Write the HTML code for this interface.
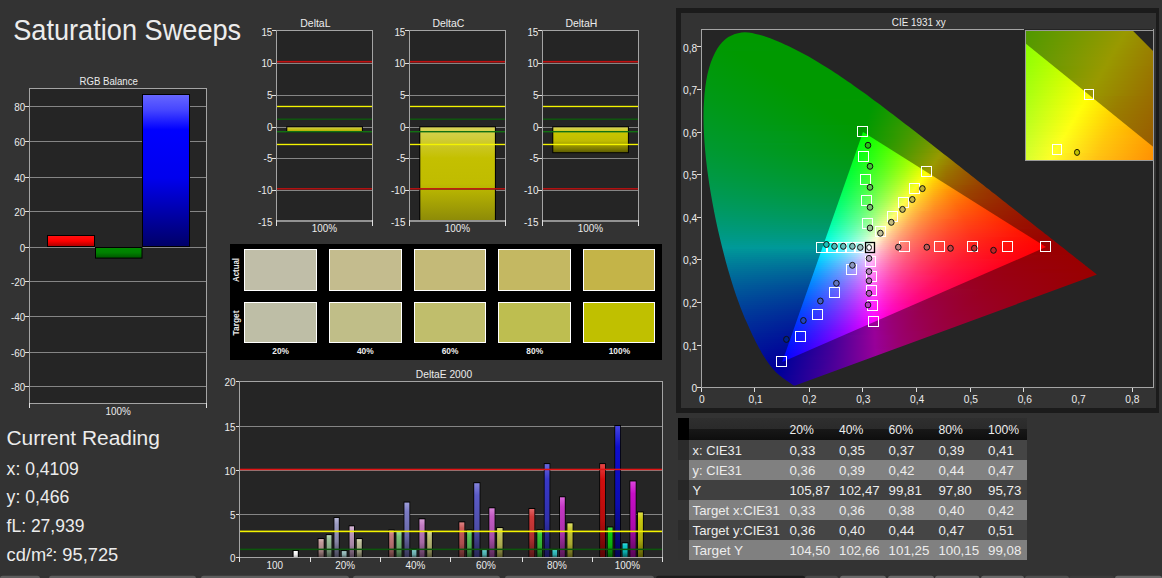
<!DOCTYPE html><html><head><meta charset="utf-8"><title>Saturation Sweeps</title><style>
html,body{margin:0;padding:0;background:#333333}
body{width:1162px;height:578px;overflow:hidden;position:relative;font-family:"Liberation Sans",sans-serif}
.c{position:absolute;overflow:hidden}
.c i{position:absolute;display:block}
svg{position:absolute;left:0;top:0}
svg text{font-family:"Liberation Sans",sans-serif;fill:#ececec}

</style></head><body>
<div style="position:absolute;left:676px;top:8px;width:475px;height:395px;border:5px solid #1b1b1b;border-right-width:3px;background:#333"></div>
<div style="position:absolute;left:701px;top:29px;width:453px;height:359px;background:#252525"></div>
<div class="c" style="left:701px;top:29px;width:453px;height:359px;clip-path:polygon(94.2px 356.5px,94.2px 356.5px,94.2px 356.5px,94.2px 356.5px,94.2px 356.5px,94.2px 356.5px,94.2px 356.5px,94.1px 356.5px,94.1px 356.5px,94.1px 356.5px,94.1px 356.5px,94.1px 356.5px,94.1px 356.5px,94.0px 356.5px,94.0px 356.5px,94.0px 356.5px,94.0px 356.5px,94.0px 356.5px,93.9px 356.5px,93.9px 356.5px,93.9px 356.5px,93.9px 356.5px,93.8px 356.5px,93.8px 356.6px,93.8px 356.6px,93.8px 356.6px,93.7px 356.6px,93.7px 356.6px,93.7px 356.6px,93.7px 356.6px,93.6px 356.6px,93.6px 356.6px,93.6px 356.6px,93.5px 356.6px,93.5px 356.6px,93.5px 356.6px,93.4px 356.6px,93.4px 356.6px,93.3px 356.6px,93.3px 356.6px,93.2px 356.6px,93.2px 356.6px,93.1px 356.6px,93.1px 356.5px,93.0px 356.5px,93.0px 356.5px,92.9px 356.5px,92.8px 356.5px,92.8px 356.4px,92.7px 356.4px,92.6px 356.3px,92.5px 356.3px,92.4px 356.2px,92.3px 356.2px,92.2px 356.1px,92.1px 356.1px,91.9px 356.0px,91.8px 355.9px,91.7px 355.8px,91.6px 355.8px,91.4px 355.7px,91.3px 355.6px,91.1px 355.4px,90.9px 355.3px,90.7px 355.2px,90.5px 355.1px,90.3px 354.9px,90.1px 354.8px,89.9px 354.6px,89.7px 354.5px,89.5px 354.3px,89.2px 354.1px,89.0px 354.0px,88.7px 353.8px,88.5px 353.6px,88.2px 353.4px,87.9px 353.2px,87.6px 353.0px,87.2px 352.7px,86.9px 352.5px,86.5px 352.2px,86.1px 351.9px,85.7px 351.7px,85.2px 351.4px,84.8px 351.1px,84.3px 350.7px,83.9px 350.4px,83.4px 350.1px,82.9px 349.7px,82.3px 349.3px,81.8px 348.9px,81.2px 348.5px,80.6px 348.1px,80.0px 347.6px,79.4px 347.1px,78.7px 346.5px,78.0px 346.0px,77.3px 345.3px,76.6px 344.7px,75.9px 344.1px,75.1px 343.4px,74.3px 342.5px,73.4px 341.6px,72.5px 340.6px,71.6px 339.5px,70.6px 338.3px,69.5px 337.0px,68.4px 335.6px,67.3px 334.0px,66.1px 332.3px,64.9px 330.5px,63.6px 328.6px,62.3px 326.5px,60.9px 324.2px,59.5px 321.6px,58.0px 318.9px,56.5px 316.0px,54.8px 312.9px,53.2px 309.6px,51.4px 306.0px,49.6px 302.1px,47.8px 297.9px,45.8px 293.6px,43.7px 288.9px,41.7px 284.0px,39.6px 278.7px,37.5px 273.1px,35.4px 267.2px,33.3px 261.0px,31.2px 254.4px,29.1px 247.5px,27.0px 240.4px,24.9px 233.0px,22.9px 225.3px,20.8px 217.1px,18.8px 208.8px,16.8px 200.2px,14.9px 191.5px,13.2px 182.9px,11.5px 174.1px,9.9px 165.1px,8.4px 156.1px,7.1px 147.0px,5.9px 138.1px,4.9px 129.3px,4.1px 120.8px,3.4px 112.2px,2.9px 103.8px,2.6px 95.5px,2.5px 87.5px,2.6px 79.8px,3.0px 72.3px,3.5px 65.1px,4.3px 58.0px,5.3px 51.3px,6.5px 45.0px,8.0px 39.2px,9.7px 33.8px,11.7px 28.7px,13.9px 24.0px,16.2px 19.8px,18.8px 16.1px,21.4px 12.9px,24.3px 10.2px,27.3px 8.0px,30.5px 6.4px,33.8px 5.1px,37.1px 4.2px,40.5px 3.6px,43.9px 3.3px,47.5px 3.5px,51.1px 4.1px,54.7px 4.9px,58.3px 5.8px,62.0px 6.8px,65.6px 7.9px,69.3px 9.2px,72.9px 10.7px,76.6px 12.2px,80.2px 13.8px,83.8px 15.4px,87.3px 17.1px,90.8px 18.7px,94.2px 20.4px,97.6px 22.2px,101.0px 24.0px,104.3px 25.8px,107.7px 27.6px,111.0px 29.5px,114.3px 31.5px,117.6px 33.4px,120.8px 35.4px,124.1px 37.4px,127.4px 39.5px,130.6px 41.6px,133.9px 43.7px,137.1px 45.8px,140.3px 48.0px,143.6px 50.2px,146.8px 52.4px,150.0px 54.6px,153.2px 56.9px,156.4px 59.2px,159.6px 61.5px,162.9px 63.8px,166.1px 66.1px,169.3px 68.5px,172.5px 70.9px,175.7px 73.2px,178.9px 75.6px,182.1px 78.0px,185.3px 80.5px,188.5px 82.9px,191.7px 85.3px,194.9px 87.8px,198.1px 90.2px,201.3px 92.7px,204.5px 95.2px,207.7px 97.6px,210.9px 100.1px,214.1px 102.6px,217.3px 105.1px,220.5px 107.5px,223.7px 110.0px,226.9px 112.5px,230.1px 115.0px,233.2px 117.5px,236.4px 119.9px,239.6px 122.4px,242.7px 124.9px,245.8px 127.3px,249.0px 129.8px,252.1px 132.2px,255.2px 134.7px,258.2px 137.1px,261.3px 139.5px,264.4px 141.9px,267.4px 144.3px,270.4px 146.7px,273.4px 149.1px,276.4px 151.4px,279.3px 153.7px,282.3px 156.1px,285.2px 158.4px,288.1px 160.6px,290.9px 162.9px,293.8px 165.1px,296.6px 167.3px,299.4px 169.5px,302.1px 171.7px,304.8px 173.8px,307.5px 175.9px,310.1px 178.0px,312.7px 180.0px,315.3px 182.0px,317.8px 184.0px,320.3px 186.0px,322.7px 187.9px,325.0px 189.8px,327.3px 191.6px,329.6px 193.3px,331.7px 195.1px,333.9px 196.7px,336.0px 198.4px,338.0px 200.0px,340.0px 201.6px,342.0px 203.1px,343.9px 204.7px,345.8px 206.1px,347.7px 207.6px,349.4px 209.0px,351.1px 210.3px,352.8px 211.6px,354.4px 212.9px,355.9px 214.1px,357.4px 215.2px,358.9px 216.4px,360.3px 217.5px,361.7px 218.6px,363.0px 219.6px,364.2px 220.6px,365.4px 221.5px,366.6px 222.5px,367.7px 223.4px,368.8px 224.2px,369.8px 225.0px,370.8px 225.8px,371.8px 226.6px,372.7px 227.3px,373.6px 228.0px,374.5px 228.7px,375.3px 229.4px,376.1px 230.0px,376.9px 230.6px,377.6px 231.2px,378.4px 231.7px,379.0px 232.3px,379.7px 232.8px,380.3px 233.3px,381.0px 233.8px,381.6px 234.3px,382.2px 234.7px,382.7px 235.2px,383.3px 235.6px,383.8px 236.1px,384.3px 236.5px,384.8px 236.9px,385.3px 237.3px,385.8px 237.6px,386.3px 238.0px,386.7px 238.3px,387.1px 238.7px,387.5px 239.0px,387.9px 239.3px,388.3px 239.6px,388.7px 239.9px,389.0px 240.1px,389.4px 240.4px,389.7px 240.7px,390.0px 240.9px,390.3px 241.1px,390.6px 241.3px,390.8px 241.5px,391.1px 241.7px,391.3px 241.9px,391.5px 242.1px,391.8px 242.3px,392.0px 242.5px,392.2px 242.6px,392.4px 242.8px,392.5px 242.9px,392.7px 243.0px,392.9px 243.2px,393.0px 243.3px,393.2px 243.4px,393.3px 243.5px,393.5px 243.6px,393.6px 243.8px,393.8px 243.9px,394.0px 244.1px,394.2px 244.2px,394.4px 244.4px,394.5px 244.5px,394.7px 244.6px,394.8px 244.7px,394.9px 244.8px,395.1px 244.9px,395.2px 245.0px,395.3px 245.1px,395.4px 245.2px,395.5px 245.2px,395.6px 245.3px,395.7px 245.4px,395.8px 245.5px,395.8px 245.5px,395.9px 245.5px,395.9px 245.6px,395.9px 245.6px,396.0px 245.6px,396.0px 245.6px,396.0px 245.6px)"><i style="top:2px;left:37px;width:15px;height:2px;background:#090"></i><i style="top:4px;left:30px;width:31px;height:2px;background:#090"></i><i style="top:6px;left:26px;width:41px;height:2px;background:#090"></i><i style="top:8px;left:23px;width:50px;height:2px;background:#090"></i><i style="top:10px;left:21px;width:57px;height:2px;background:#090"></i><i style="top:12px;left:19px;width:63px;height:2px;background:#090"></i><i style="top:14px;left:17px;width:69px;height:2px;background:#009901"></i><i style="top:16px;left:16px;width:75px;height:2px;background:linear-gradient(90deg,#009902 0,#090 75px)"></i><i style="top:18px;left:15px;width:80px;height:2px;background:linear-gradient(90deg,#009903 0,#090 80px)"></i><i style="top:20px;left:14px;width:85px;height:2px;background:linear-gradient(90deg,#009903 0,#090 85px)"></i><i style="top:22px;left:12px;width:91px;height:2px;background:linear-gradient(90deg,#009904 0,#090 23px,#090 91px)"></i><i style="top:24px;left:11px;width:95px;height:2px;background:linear-gradient(90deg,#009905 0,#090 27px,#090 95px)"></i><i style="top:26px;left:10px;width:100px;height:2px;background:linear-gradient(90deg,#009906 0,#090 31px,#090 100px)"></i><i style="top:28px;left:10px;width:103px;height:2px;background:linear-gradient(90deg,#009907 0,#090 34px,#090 103px)"></i><i style="top:30px;left:9px;width:108px;height:2px;background:linear-gradient(90deg,#009908 0,#090 38px,#090 108px)"></i><i style="top:32px;left:8px;width:112px;height:2px;background:linear-gradient(90deg,#009908 0,#090 43px,#090 112px)"></i><i style="top:34px;left:7px;width:116px;height:2px;background:linear-gradient(90deg,#009909 0,#090 47px,#090 116px)"></i><i style="top:36px;left:7px;width:120px;height:2px;background:linear-gradient(90deg,#00990a 0,#090 50px,#090 120px)"></i><i style="top:38px;left:6px;width:124px;height:2px;background:linear-gradient(90deg,#00990b 0,#090 54px,#090 124px)"></i><i style="top:40px;left:6px;width:127px;height:2px;background:linear-gradient(90deg,#00990c 0,#090 57px,#090 127px)"></i><i style="top:42px;left:5px;width:131px;height:2px;background:linear-gradient(90deg,#00990d 0,#090 61px,#090 131px)"></i><i style="top:44px;left:5px;width:134px;height:2px;background:linear-gradient(90deg,#00990d 0,#090 65px,#090 134px)"></i><i style="top:46px;left:4px;width:138px;height:2px;background:linear-gradient(90deg,#00990e 0,#090 69px,#090 138px)"></i><i style="top:48px;left:4px;width:141px;height:2px;background:linear-gradient(90deg,#00990f 0,#090 72px,#090 141px)"></i><i style="top:50px;left:4px;width:144px;height:2px;background:linear-gradient(90deg,#009910 0,#090 75px,#090 144px)"></i><i style="top:52px;left:3px;width:148px;height:2px;background:linear-gradient(90deg,#091 0,#090 79px,#090 148px)"></i><i style="top:54px;left:3px;width:150px;height:2px;background:linear-gradient(90deg,#091 0,#090 82px,#090 150px)"></i><i style="top:56px;left:3px;width:153px;height:2px;background:linear-gradient(90deg,#009912 0,#090 86px,#090 153px)"></i><i style="top:58px;left:3px;width:156px;height:2px;background:linear-gradient(90deg,#009913 0,#090 89px,#090 156px)"></i><i style="top:60px;left:2px;width:160px;height:2px;background:linear-gradient(90deg,#009914 0,#090 93px,#090 160px)"></i><i style="top:62px;left:2px;width:163px;height:2px;background:linear-gradient(90deg,#009915 0,#090 96px,#090 163px)"></i><i style="top:64px;left:2px;width:165px;height:2px;background:linear-gradient(90deg,#009916 0,#090 99px,#090 165px)"></i><i style="top:66px;left:2px;width:168px;height:2px;background:linear-gradient(90deg,#009917 0,#090 102px,#090 168px)"></i><i style="top:68px;left:2px;width:171px;height:2px;background:linear-gradient(90deg,#009917 0,#090 106px,#090 171px)"></i><i style="top:70px;left:1px;width:174px;height:2px;background:linear-gradient(90deg,#009918 0,#090 110px,#029900 174px)"></i><i style="top:72px;left:1px;width:177px;height:2px;background:linear-gradient(90deg,#009919 0,#090 113px,#090 171px,#069900 177px)"></i><i style="top:74px;left:1px;width:180px;height:2px;background:linear-gradient(90deg,#00991a 0,#090 116px,#090 170px,#0b9900 180px)"></i><i style="top:76px;left:1px;width:183px;height:2px;background:linear-gradient(90deg,#00991b 0,#090 119px,#090 170px,#0f9900 183px)"></i><i style="top:78px;left:1px;width:185px;height:2px;background:linear-gradient(90deg,#00991c 0,#090 122px,#090 169px,#129900 185px)"></i><i style="top:80px;left:1px;width:188px;height:2px;background:linear-gradient(90deg,#00991d 0,#090 126px,#090 168px,#179900 188px)"></i><i style="top:82px;left:1px;width:190px;height:2px;background:linear-gradient(90deg,#00991e 0,#090 129px,#090 168px,#1b9900 190px)"></i><i style="top:84px;left:1px;width:193px;height:2px;background:linear-gradient(90deg,#00991f 0,#090 132px,#090 167px,#209900 193px)"></i><i style="top:86px;left:1px;width:196px;height:2px;background:linear-gradient(90deg,#009920 0,#090 135px,#090 166px,#259900 196px)"></i><i style="top:88px;left:1px;width:198px;height:2px;background:linear-gradient(90deg,#009921 0,#090 138px,#090 166px,#299900 198px)"></i><i style="top:90px;left:1px;width:201px;height:2px;background:linear-gradient(90deg,#092 0,#090 142px,#090 165px,#2f9900 201px)"></i><i style="top:92px;left:1px;width:204px;height:2px;background:linear-gradient(90deg,#009923 0,#090 145px,#090 164px,#349900 204px)"></i><i style="top:94px;left:1px;width:206px;height:2px;background:linear-gradient(90deg,#009924 0,#090 148px,#090 164px,#399900 206px)"></i><i style="top:96px;left:1px;width:209px;height:2px;background:linear-gradient(90deg,#009925 0,#090 163px,#3f9900 209px)"></i><i style="top:98px;left:1px;width:211px;height:2px;background:linear-gradient(90deg,#009926 0,#090 162px,#490 211px)"></i><i style="top:100px;left:1px;width:214px;height:2px;background:linear-gradient(90deg,#009927 0,#090 162px,#4a9900 214px)"></i><i style="top:102px;left:1px;width:216px;height:2px;background:linear-gradient(90deg,#009928 0,#009916 86px,#090 161px,#4f9900 216px)"></i><i style="top:104px;left:1px;width:219px;height:2px;background:linear-gradient(90deg,#009929 0,#009917 86px,#009901 160px,#299900 190px,#569900 219px)"></i><i style="top:106px;left:2px;width:221px;height:2px;background:linear-gradient(90deg,#00992a 0,#009918 85px,#009903 158px,#2a9900 189px,#5e9900 221px)"></i><i style="top:108px;left:2px;width:223px;height:2px;background:linear-gradient(90deg,#00992b 0,#009919 85px,#009904 158px,#309900 192px,#639900 223px)"></i><i style="top:110px;left:2px;width:226px;height:2px;background:linear-gradient(90deg,#00992c 0,#00991a 85px,#009905 157px,#329900 192px,#6b9900 226px)"></i><i style="top:112px;left:2px;width:228px;height:2px;background:linear-gradient(90deg,#00992e 0,#009907 156px,#1b9900 176px,#390 192px,#729900 228px)"></i><i style="top:114px;left:2px;width:231px;height:2px;background:linear-gradient(90deg,#00992f 0,#00991d 84px,#009908 156px,#219900 179px,#3a9900 195px,#7a9900 231px)"></i><i style="top:116px;left:2px;width:233px;height:2px;background:linear-gradient(90deg,#009930 0,#00990a 155px,#279900 182px,#3d9900 196px,#819900 233px)"></i><i style="top:118px;left:2px;width:236px;height:2px;background:linear-gradient(90deg,#009931 0,#00990b 154px,#3f9900 196px,#8a9900 236px)"></i><i style="top:120px;left:3px;width:238px;height:2px;background:linear-gradient(90deg,#009932 0,#00990d 153px,#469900 198px,#949900 238px)"></i><i style="top:122px;left:3px;width:240px;height:2px;background:linear-gradient(90deg,#009934 0,#00990e 152px,#490 196px,#999700 240px)"></i><i style="top:124px;left:3px;width:243px;height:2px;background:linear-gradient(90deg,#009935 0,#009910 151px,#469900 196px,#989900 237px,#998d00 243px)"></i><i style="top:126px;left:3px;width:245px;height:2px;background:linear-gradient(90deg,#009936 0,#019911 151px,#479901 195px,#979900 235px,#998600 245px)"></i><i style="top:128px;left:3px;width:248px;height:2px;background:linear-gradient(90deg,#009938 0,#009913 150px,#479903 194px,#989900 234px,#997e00 248px)"></i><i style="top:130px;left:3px;width:250px;height:2px;background:linear-gradient(90deg,#009939 0,#009915 149px,#479905 193px,#5c9900 204px,#979900 232px,#997800 250px)"></i><i style="top:132px;left:4px;width:252px;height:2px;background:linear-gradient(90deg,#00993a 0,#009917 147px,#459907 190px,#649900 206px,#989900 230px,#997000 252px)"></i><i style="top:134px;left:4px;width:254px;height:2px;background:linear-gradient(90deg,#00993c 0,#009918 147px,#489908 190px,#6d9900 209px,#999800 229px,#996b00 254px)"></i><i style="top:136px;left:4px;width:257px;height:2px;background:linear-gradient(90deg,#00993d 0,#00991a 146px,#48990a 189px,#769900 212px,#990 227px,#997d00 241px,#996500 257px)"></i><i style="top:138px;left:4px;width:259px;height:2px;background:linear-gradient(90deg,#00993e 0,#00991c 145px,#44990d 186px,#809900 215px,#999800 226px,#997a00 241px,#996000 259px)"></i><i style="top:140px;left:5px;width:261px;height:2px;background:linear-gradient(90deg,#009940 0,#00991e 144px,#48990e 186px,#990 223px,#970 240px,#995a00 261px)"></i><i style="top:142px;left:5px;width:263px;height:2px;background:linear-gradient(90deg,#009941 0,#009920 143px,#479911 184px,#999800 222px,#997400 240px,#995600 263px)"></i><i style="top:144px;left:5px;width:266px;height:2px;background:linear-gradient(90deg,#009943 0,#092 142px,#479913 183px,#999902 220px,#997100 240px,#995100 266px)"></i><i style="top:146px;left:5px;width:269px;height:2px;background:linear-gradient(90deg,#094 0,#009924 141px,#439916 180px,#999804 219px,#996d00 241px,#994c00 269px)"></i><i style="top:148px;left:6px;width:270px;height:2px;background:linear-gradient(90deg,#009946 0,#009926 140px,#489917 180px,#999907 216px,#997d00 229px,#996c00 239px,#994800 270px)"></i><i style="top:150px;left:6px;width:273px;height:2px;background:linear-gradient(90deg,#009947 0,#009928 139px,#46991a 178px,#999809 215px,#997d02 227px,#996800 240px,#940 273px)"></i><i style="top:152px;left:6px;width:275px;height:2px;background:linear-gradient(90deg,#009949 0,#00992a 138px,#46991c 177px,#99990c 213px,#997e05 225px,#996700 239px,#994100 275px)"></i><i style="top:154px;left:7px;width:277px;height:2px;background:linear-gradient(90deg,#00994b 0,#00992c 137px,#48991e 176px,#98990f 210px,#997b06 224px,#996300 239px,#993d00 277px)"></i><i style="top:156px;left:7px;width:279px;height:2px;background:linear-gradient(90deg,#00994c 0,#00992e 136px,#479921 174px,#999912 209px,#997b09 222px,#996101 238px,#994c00 257px,#993a00 279px)"></i><i style="top:158px;left:7px;width:282px;height:2px;background:linear-gradient(90deg,#00994e 0,#009931 135px,#479924 173px,#989915 207px,#99780a 222px,#995f02 238px,#994900 258px,#993600 282px)"></i><i style="top:160px;left:8px;width:283px;height:2px;background:linear-gradient(90deg,#009950 0,#019933 134px,#479926 171px,#979918 204px,#99770c 220px,#995c04 237px,#994600 258px,#930 283px)"></i><i style="top:162px;left:8px;width:286px;height:2px;background:linear-gradient(90deg,#009952 0,#009935 133px,#479929 170px,#98991b 203px,#99750e 219px,#995a05 237px,#994300 259px,#993000 286px)"></i><i style="top:164px;left:8px;width:288px;height:2px;background:linear-gradient(90deg,#009953 0,#009938 132px,#46992c 168px,#97991e 201px,#997410 218px,#995806 237px,#994000 260px,#992d00 288px)"></i><i style="top:166px;left:9px;width:290px;height:2px;background:linear-gradient(90deg,#095 0,#00993a 130px,#46992f 166px,#989921 199px,#997313 216px,#995608 235px,#994200 255px,#992a00 290px)"></i><i style="top:168px;left:9px;width:292px;height:2px;background:linear-gradient(90deg,#009957 0,#00993d 130px,#469932 165px,#979925 197px,#997115 215px,#995409 235px,#993e00 258px,#992800 292px)"></i><i style="top:170px;left:9px;width:295px;height:2px;background:linear-gradient(90deg,#009959 0,#009940 129px,#469935 164px,#999928 196px,#997017 214px,#99520a 235px,#993900 261px,#992500 295px)"></i><i style="top:172px;left:10px;width:297px;height:2px;background:linear-gradient(90deg,#00995b 0,#009942 127px,#449938 161px,#97992b 193px,#996f19 212px,#994f0b 234px,#993600 263px,#992300 297px)"></i><i style="top:174px;left:10px;width:299px;height:2px;background:linear-gradient(90deg,#00995d 0,#009945 127px,#47993b 161px,#99992f 192px,#996f1c 210px,#994e0d 233px,#993200 266px,#992000 299px)"></i><i style="top:176px;left:10px;width:302px;height:2px;background:linear-gradient(90deg,#00995f 0,#009948 126px,#47993e 160px,#979932 190px,#996c1d 210px,#994c0e 233px,#992e00 269px,#991e00 302px)"></i><i style="top:178px;left:11px;width:303px;height:2px;background:linear-gradient(90deg,#009961 0,#00994b 124px,#459941 157px,#999936 188px,#996c20 207px,#994b10 231px,#992a00 272px,#991c00 303px)"></i><i style="top:180px;left:11px;width:306px;height:2px;background:linear-gradient(90deg,#009963 0,#01994e 124px,#489944 157px,#97993a 186px,#996b22 206px,#994811 231px,#992700 275px,#991a00 306px)"></i><i style="top:182px;left:11px;width:308px;height:2px;background:linear-gradient(90deg,#096 0,#009951 123px,#489948 156px,#99993e 185px,#998031 194px,#996b25 204px,#994712 230px,#993408 252px,#992400 278px,#991800 308px)"></i><i style="top:184px;left:12px;width:310px;height:2px;background:linear-gradient(90deg,#009968 0,#009954 121px,#46994b 153px,#989942 182px,#996827 203px,#994514 229px,#993209 252px,#920 280px,#991600 310px)"></i><i style="top:186px;left:12px;width:312px;height:2px;background:linear-gradient(90deg,#00996a 0,#009957 120px,#44994f 151px,#999945 181px,#998037 190px,#99692a 201px,#994415 228px,#992f09 253px,#991f00 283px,#991400 312px)"></i><i style="top:188px;left:13px;width:314px;height:2px;background:linear-gradient(90deg,#00996d 0,#00995a 119px,#479953 150px,#98994a 178px,#997c38 189px,#99672c 199px,#994216 227px,#992e0a 252px,#991e01 282px,#991200 314px)"></i><i style="top:190px;left:13px;width:316px;height:2px;background:linear-gradient(90deg,#00996f 0,#00995e 118px,#479957 149px,#99994e 177px,#997c3d 187px,#99662f 198px,#994018 226px,#992d0c 250px,#991d02 280px,#991000 316px)"></i><i style="top:192px;left:14px;width:318px;height:2px;background:linear-gradient(90deg,#009972 0,#009961 116px,#45995b 146px,#989953 174px,#997b3f 185px,#996431 196px,#993e19 225px,#992b0d 250px,#991b03 280px,#990e00 318px)"></i><i style="top:194px;left:14px;width:320px;height:2px;background:linear-gradient(90deg,#009974 0,#019965 116px,#48995e 146px,#969957 172px,#997942 184px,#996333 195px,#993d1b 224px,#992108 264px,#991500 294px,#990d00 320px)"></i><i style="top:196px;left:14px;width:323px;height:2px;background:linear-gradient(90deg,#097 0,#009969 115px,#489963 145px,#98995c 171px,#997a47 182px,#996337 193px,#994e28 207px,#993c1c 223px,#992009 265px,#991300 297px,#990b00 323px)"></i><i style="top:198px;left:15px;width:325px;height:2px;background:linear-gradient(90deg,#00997a 0,#00996c 113px,#469967 142px,#969961 168px,#99784a 180px,#996139 191px,#994c2a 205px,#993a1d 222px,#992710 247px,#991806 277px,#990a00 325px)"></i><i style="top:200px;left:15px;width:327px;height:2px;background:linear-gradient(90deg,#00997c 0,#019970 113px,#44996c 140px,#999664 168px,#99794e 178px,#99603c 190px,#994a2b 205px,#99381e 222px,#992611 247px,#991706 277px,#990e00 303px,#990800 327px)"></i><i style="top:202px;left:16px;width:329px;height:2px;background:linear-gradient(90deg,#00997f 0,#009974 111px,#479970 139px,#99986a 165px,#997a53 175px,#995e3e 188px,#99482d 203px,#993620 220px,#992512 245px,#991607 276px,#990c00 305px,#990700 329px)"></i><i style="top:204px;left:16px;width:331px;height:2px;background:linear-gradient(90deg,#009982 0,#009979 110px,#419975 136px,#99966e 164px,#997856 174px,#995d41 187px,#99472f 202px,#993522 219px,#992414 244px,#991508 275px,#990b00 308px,#990500 331px)"></i><i style="top:206px;left:17px;width:333px;height:2px;background:linear-gradient(90deg,#009985 0,#00997d 108px,#42997a 134px,#999875 161px,#99795b 171px,#995d45 184px,#994732 199px,#993423 217px,#992315 242px,#991409 273px,#990900 310px,#990400 333px)"></i><i style="top:208px;left:17px;width:335px;height:2px;background:linear-gradient(90deg,#098 0,#009981 108px,#48997f 135px,#99997b 159px,#99775f 170px,#995d49 182px,#994636 197px,#993325 216px,#992116 241px,#99130a 273px,#990700 313px,#990300 335px)"></i><i style="top:210px;left:18px;width:337px;height:2px;background:linear-gradient(90deg,#00998b 0,#009986 106px,#459984 132px,#999780 157px,#997562 168px,#995a4a 181px,#994437 196px,#993126 215px,#991f17 241px,#99120b 272px,#990600 315px,#990100 337px)"></i><i style="top:212px;left:18px;width:339px;height:2px;background:linear-gradient(90deg,#00998f 0,#00998b 105px,#469989 131px,#999987 155px,#997667 166px,#995a4e 179px,#99443a 194px,#993028 213px,#991f19 239px,#99110c 271px,#990400 319px,#900 339px)"></i><i style="top:214px;left:19px;width:341px;height:2px;background:linear-gradient(90deg,#009992 0,#019990 104px,#46998f 129px,#99978c 153px,#99746b 164px,#995851 177px,#99413b 193px,#992e29 212px,#991d19 238px,#990f0c 271px,#990200 321px,#900 341px)"></i><i style="top:216px;left:19px;width:343px;height:2px;background:linear-gradient(90deg,#009996 0,#009995 103px,#479994 128px,#999994 151px,#997571 162px,#995855 175px,#99413e 191px,#992d2b 211px,#991c1b 237px,#990e0d 270px,#990100 324px,#900 343px)"></i><i style="top:218px;left:20px;width:345px;height:2px;background:linear-gradient(90deg,#099 0,#009899 101px,#469899 126px,#999798 149px,#997374 160px,#995658 173px,#993e3f 190px,#992b2c 210px,#991a1b 237px,#990d0d 271px,#990001 323px,#900 345px)"></i><i style="top:220px;left:20px;width:348px;height:2px;background:linear-gradient(90deg,#009599 0,#019399 101px,#479299 126px,#999199 149px,#996e75 160px,#995157 174px,#993a3f 191px,#99282c 211px,#99171a 240px,#990a0d 276px,#990002 318px,#900 348px)"></i><i style="top:222px;left:21px;width:349px;height:2px;background:linear-gradient(90deg,#009299 0,#008e99 99px,#488c99 125px,#998a99 148px,#996a76 159px,#994e58 173px,#993840 190px,#99262c 211px,#99151a 241px,#99080c 279px,#990004 313px,#900 349px)"></i><i style="top:224px;left:21px;width:352px;height:2px;background:linear-gradient(90deg,#008e99 0,#008999 98px,#438799 123px,#998296 149px,#996172 161px,#994855 175px,#99333e 192px,#99222c 213px,#991219 245px,#99050b 286px,#990005 308px,#900 352px)"></i><i style="top:226px;left:22px;width:353px;height:2px;background:linear-gradient(90deg,#008b99 0,#008499 96px,#418299 121px,#997c97 148px,#995d72 160px,#994556 174px,#99313f 191px,#99202c 212px,#991019 246px,#99030a 289px,#900 353px)"></i><i style="top:228px;left:22px;width:356px;height:2px;background:linear-gradient(90deg,#008799 0,#018099 96px,#457c99 122px,#997797 148px,#995973 160px,#994257 174px,#992e3f 192px,#991e2d 213px,#990d18 249px,#990109 295px,#900 356px)"></i><i style="top:230px;left:23px;width:357px;height:2px;background:linear-gradient(90deg,#008499 0,#007b99 94px,#457799 121px,#997297 147px,#995574 159px,#993f58 173px,#992b40 191px,#991c2d 213px,#990c1a 247px,#99000a 292px,#900 357px)"></i><i style="top:232px;left:23px;width:360px;height:2px;background:linear-gradient(90deg,#008199 0,#079 93px,#437399 120px,#996d98 147px,#995175 159px,#993a57 174px,#992840 192px,#99192d 214px,#990b1b 246px,#99000c 287px,#900 360px)"></i><i style="top:234px;left:24px;width:361px;height:2px;background:linear-gradient(90deg,#007d99 0,#017399 92px,#476e99 120px,#996898 146px,#994d75 158px,#993858 173px,#992641 191px,#99182e 213px,#990a1c 244px,#99000e 282px,#900 361px)"></i><i style="top:236px;left:24px;width:364px;height:2px;background:linear-gradient(90deg,#007a99 0,#006f99 91px,#486999 120px,#996399 146px,#994a76 158px,#993559 173px,#992442 191px,#99152e 214px,#990a1e 242px,#990010 277px,#900 364px)"></i><i style="top:238px;left:25px;width:365px;height:2px;background:linear-gradient(90deg,#079 0,#006b99 89px,#466599 118px,#995e99 145px,#994574 158px,#993158 173px,#992141 191px,#99132e 214px,#990012 272px,#900 365px)"></i><i style="top:240px;left:25px;width:368px;height:2px;background:linear-gradient(90deg,#007499 0,#016799 89px,#446199 117px,#995796 146px,#994073 159px,#992d58 174px,#991d40 193px,#99112d 216px,#990015 267px,#990006 321px,#900 368px)"></i><i style="top:242px;left:26px;width:369px;height:2px;background:linear-gradient(90deg,#007199 0,#006399 87px,#455d99 116px,#995397 145px,#993c74 158px,#992a57 174px,#991b40 193px,#990f2d 216px,#990017 262px,#990008 316px,#900 369px)"></i><i style="top:244px;left:27px;width:370px;height:2px;background:linear-gradient(90deg,#006e99 0,#006099 85px,#435999 114px,#994f97 144px,#993974 157px,#992758 173px,#991941 192px,#990d2e 215px,#990019 256px,#901 280px,#900 370px)"></i><i style="top:246px;left:27px;width:369px;height:2px;background:linear-gradient(90deg,#006b99 0,#005c99 84px,#435599 114px,#994b97 144px,#993675 157px,#992558 173px,#991742 192px,#990c2f 215px,#99001c 251px,#990012 279px,#900 369px)"></i><i style="top:248px;left:28px;width:363px;height:2px;background:linear-gradient(90deg,#006899 0,#005999 83px,#475199 114px,#994798 143px,#993376 156px,#99235b 171px,#991643 190px,#990b30 213px,#99001e 246px,#990014 274px,#900 363px)"></i><i style="top:250px;left:28px;width:358px;height:2px;background:linear-gradient(90deg,#006599 0,#005699 82px,#474d99 114px,#994398 143px,#993076 156px,#99215b 171px,#991444 190px,#990932 212px,#990021 241px,#990015 271px,#990002 358px)"></i><i style="top:252px;left:29px;width:351px;height:2px;background:linear-gradient(90deg,#006299 0,#005399 80px,#464a99 112px,#993f99 142px,#992d77 155px,#991e5c 170px,#991246 188px,#990833 210px,#990024 236px,#990017 268px,#990003 351px)"></i><i style="top:254px;left:30px;width:345px;height:2px;background:linear-gradient(90deg,#005f99 0,#014f99 79px,#494699 112px,#993b99 141px,#992b7a 153px,#991d5e 168px,#991148 186px,#990735 208px,#990027 230px,#990018 264px,#990004 345px)"></i><i style="top:256px;left:30px;width:339px;height:2px;background:linear-gradient(90deg,#005c99 0,#004c99 78px,#474399 111px,#993799 141px,#992778 154px,#991b5f 168px,#991049 185px,#990637 206px,#99002a 226px,#99001a 261px,#990006 339px)"></i><i style="top:258px;left:31px;width:333px;height:2px;background:linear-gradient(90deg,#005a99 0,#004999 76px,#434099 108px,#993397 141px,#992479 153px,#99185e 168px,#990d49 185px,#990537 205px,#99002d 220px,#99001b 258px,#990007 333px)"></i><i style="top:260px;left:31px;width:327px;height:2px;background:linear-gradient(90deg,#005799 0,#014699 76px,#463c99 109px,#992f97 141px,#992179 153px,#991661 167px,#990c4b 184px,#990439 204px,#99001d 255px,#990009 327px)"></i><i style="top:262px;left:32px;width:321px;height:2px;background:linear-gradient(90deg,#005499 0,#049 74px,#473999 108px,#992c97 140px,#991f7a 152px,#991461 166px,#990a4c 183px,#99033a 202px,#99001e 252px,#99000b 321px)"></i><i style="top:264px;left:33px;width:314px;height:2px;background:linear-gradient(90deg,#005299 0,#004199 72px,#453699 106px,#992898 139px,#991c7b 151px,#991263 164px,#99094f 180px,#99023d 199px,#990021 247px,#99000c 314px)"></i><i style="top:266px;left:33px;width:309px;height:2px;background:linear-gradient(90deg,#004f99 0,#013e99 72px,#483399 107px,#992598 139px,#99197b 151px,#991064 164px,#99013e 198px,#902 245px,#99000e 309px)"></i><i style="top:268px;left:34px;width:303px;height:2px;background:linear-gradient(90deg,#004c99 0,#003c99 70px,#483099 106px,#929 138px,#99177c 150px,#990e65 163px,#990040 196px,#990024 241px,#990010 303px)"></i><i style="top:270px;left:35px;width:296px;height:2px;background:linear-gradient(90deg,#004a99 0,#003999 68px,#472d99 104px,#991f99 137px,#99157e 148px,#990c67 161px,#990042 193px,#990026 237px,#990012 296px)"></i><i style="top:272px;left:36px;width:290px;height:2px;background:linear-gradient(90deg,#004799 0,#003799 66px,#472a99 103px,#991c99 136px,#99127f 147px,#990a67 160px,#904 191px,#990028 233px,#990014 290px)"></i><i style="top:274px;left:36px;width:284px;height:2px;background:linear-gradient(90deg,#004599 0,#013499 66px,#482799 103px,#981999 136px,#99107f 147px,#99096a 159px,#990051 178px,#990045 190px,#99002a 230px,#990016 284px)"></i><i style="top:276px;left:37px;width:278px;height:2px;background:linear-gradient(90deg,#004299 0,#003299 64px,#442599 100px,#991597 136px,#99076a 158px,#990056 173px,#990047 188px,#99002c 227px,#990018 278px)"></i><i style="top:278px;left:38px;width:271px;height:2px;background:linear-gradient(90deg,#004099 0,#003099 62px,#452399 99px,#991297 135px,#99046b 157px,#990049 185px,#99002f 222px,#99001a 271px)"></i><i style="top:280px;left:39px;width:265px;height:2px;background:linear-gradient(90deg,#003d99 0,#012d99 61px,#452099 98px,#991098 134px,#99036d 155px,#99004b 183px,#990030 219px,#99001c 265px)"></i><i style="top:282px;left:39px;width:259px;height:2px;background:linear-gradient(90deg,#003b99 0,#002b99 60px,#461d99 98px,#990d98 134px,#99016e 155px,#99004d 181px,#903 215px,#99001f 259px)"></i><i style="top:284px;left:40px;width:253px;height:2px;background:linear-gradient(90deg,#003999 0,#002999 58px,#471b99 97px,#990a98 133px,#990070 153px,#99004f 179px,#990035 212px,#990021 253px)"></i><i style="top:286px;left:41px;width:247px;height:2px;background:linear-gradient(90deg,#003699 0,#012699 57px,#471899 96px,#990899 132px,#990072 151px,#990051 176px,#990038 207px,#990024 247px)"></i><i style="top:288px;left:42px;width:240px;height:2px;background:linear-gradient(90deg,#003499 0,#002599 55px,#481699 95px,#990599 131px,#990072 150px,#990053 174px,#99003b 203px,#990027 240px)"></i><i style="top:290px;left:43px;width:234px;height:2px;background:linear-gradient(90deg,#003299 0,#002399 53px,#481399 94px,#990399 130px,#990073 149px,#990056 171px,#99003e 199px,#99002a 234px)"></i><i style="top:292px;left:44px;width:227px;height:2px;background:linear-gradient(90deg,#002f99 0,#012099 52px,#491199 93px,#980099 129px,#990075 147px,#990059 168px,#990041 194px,#99002d 227px)"></i><i style="top:294px;left:44px;width:222px;height:2px;background:linear-gradient(90deg,#002d99 0,#011e99 51px,#451099 91px,#990097 130px,#990076 147px,#99005a 167px,#990043 192px,#990030 222px)"></i><i style="top:296px;left:45px;width:215px;height:2px;background:linear-gradient(90deg,#002b99 0,#001d99 49px,#460d99 90px,#830099 119px,#990098 129px,#990078 145px,#99005d 164px,#990047 187px,#990034 215px)"></i><i style="top:298px;left:46px;width:209px;height:2px;background:linear-gradient(90deg,#002999 0,#001b99 47px,#460b99 89px,#709 113px,#990098 128px,#990078 144px,#99005f 162px,#99004a 183px,#990037 209px)"></i><i style="top:300px;left:47px;width:202px;height:2px;background:linear-gradient(90deg,#002799 0,#011999 46px,#470999 88px,#6f0099 108px,#970099 126px,#990079 143px,#990062 159px,#99004d 179px,#99003c 202px)"></i><i style="top:302px;left:48px;width:196px;height:2px;background:linear-gradient(90deg,#002599 0,#001799 44px,#470799 87px,#650099 102px,#909 126px,#99007c 140px,#990065 156px,#990040 196px)"></i><i style="top:304px;left:49px;width:190px;height:2px;background:linear-gradient(90deg,#029 0,#001599 42px,#480599 86px,#5d0099 97px,#909 125px,#99007f 138px,#990068 153px,#904 190px)"></i><i style="top:306px;left:50px;width:183px;height:2px;background:linear-gradient(90deg,#002099 0,#011499 41px,#480399 85px,#909 124px,#99006b 150px,#990049 183px)"></i><i style="top:308px;left:51px;width:177px;height:2px;background:linear-gradient(90deg,#001e99 0,#001299 39px,#470199 83px,#909 123px,#99006e 147px,#99004e 177px)"></i><i style="top:310px;left:52px;width:170px;height:2px;background:linear-gradient(90deg,#001c99 0,#001099 37px,#480099 82px,#980099 122px,#990072 144px,#990053 170px)"></i><i style="top:312px;left:53px;width:164px;height:2px;background:linear-gradient(90deg,#001a99 0,#010f99 36px,#480099 81px,#980099 121px,#990075 141px,#990059 164px)"></i><i style="top:314px;left:54px;width:157px;height:2px;background:linear-gradient(90deg,#001899 0,#010d99 34px,#340099 68px,#490099 80px,#980099 120px,#990079 138px,#990060 157px)"></i><i style="top:316px;left:55px;width:151px;height:2px;background:linear-gradient(90deg,#001699 0,#000c99 32px,#2e0099 63px,#470099 78px,#970099 119px,#99007c 135px,#906 151px)"></i><i style="top:318px;left:56px;width:144px;height:2px;background:linear-gradient(90deg,#001499 0,#010a99 31px,#270099 57px,#480099 77px,#970099 118px,#99006e 144px)"></i><i style="top:320px;left:57px;width:138px;height:2px;background:linear-gradient(90deg,#001299 0,#010899 29px,#209 52px,#480099 76px,#909 118px,#990075 138px)"></i><i style="top:322px;left:58px;width:132px;height:2px;background:linear-gradient(90deg,#001099 0,#000799 27px,#1b0099 46px,#490099 75px,#909 117px,#99007d 132px)"></i><i style="top:324px;left:59px;width:125px;height:2px;background:linear-gradient(90deg,#000e99 0,#000699 25px,#160099 41px,#470099 73px,#909 116px,#908 125px)"></i><i style="top:326px;left:61px;width:118px;height:2px;background:linear-gradient(90deg,#000c99 0,#010499 23px,#100099 34px,#480099 71px,#980099 114px,#990091 118px)"></i><i style="top:328px;left:62px;width:111px;height:2px;background:linear-gradient(90deg,#000a99 0,#000399 20px,#070199 26px,#4a0099 71px,#940099 111px)"></i><i style="top:330px;left:63px;width:105px;height:2px;background:linear-gradient(90deg,#000899 0,#000199 19px,#050099 23px,#409 66px,#8a0099 105px)"></i><i style="top:332px;left:64px;width:98px;height:2px;background:linear-gradient(90deg,#000699 0,#020099 19px,#3c0099 60px,#7e0099 98px)"></i><i style="top:334px;left:66px;width:91px;height:2px;background:linear-gradient(90deg,#000499 0,#030099 17px,#3a0099 56px,#750099 91px)"></i><i style="top:336px;left:67px;width:84px;height:2px;background:linear-gradient(90deg,#000299 0,#010099 14px,#309 50px,#6a0099 84px)"></i><i style="top:338px;left:69px;width:77px;height:2px;background:linear-gradient(90deg,#009 0,#009 10px,#050099 14px,#320099 47px,#620099 77px)"></i><i style="top:340px;left:71px;width:70px;height:2px;background:linear-gradient(90deg,#009 0,#009 7px,#090099 15px,#590099 70px)"></i><i style="top:342px;left:72px;width:63px;height:2px;background:linear-gradient(90deg,#009 0,#009 6px,#0a0099 14px,#500099 63px)"></i><i style="top:344px;left:74px;width:56px;height:2px;background:linear-gradient(90deg,#009 0,#009 3px,#130099 18px,#490099 56px)"></i><i style="top:346px;left:77px;width:47px;height:2px;background:linear-gradient(90deg,#010099 0,#400099 47px)"></i><i style="top:348px;left:79px;width:40px;height:2px;background:linear-gradient(90deg,#040099 0,#390099 40px)"></i><i style="top:350px;left:82px;width:31px;height:2px;background:linear-gradient(90deg,#080099 0,#310099 31px)"></i><i style="top:352px;left:85px;width:23px;height:2px;background:linear-gradient(90deg,#0d0099 0,#2b0099 23px)"></i><i style="top:354px;left:88px;width:14px;height:2px;background:linear-gradient(90deg,#109 0,#230099 14px)"></i><i style="top:356px;left:90px;width:7px;height:2px;background:linear-gradient(90deg,#150099 0,#1d0099 7px)"></i></div>
<div class="c" style="left:701px;top:29px;width:453px;height:359px;clip-path:polygon(345.0px 218.1px,162.0px 103.1px,81.2px 333.1px)"><i style="top:102px;left:160px;width:5px;height:2px;background:linear-gradient(90deg,#00ff01 0,#06ff00 5px)"></i><i style="top:104px;left:159px;width:9px;height:2px;background:linear-gradient(90deg,#00ff03 0,#01ff02 3px,#0eff00 9px)"></i><i style="top:106px;left:159px;width:12px;height:2px;background:linear-gradient(90deg,#00ff05 0,#01ff04 2px,#17ff00 12px)"></i><i style="top:108px;left:158px;width:16px;height:2px;background:linear-gradient(90deg,#00ff08 0,#00ff07 2px,#20ff00 16px)"></i><i style="top:110px;left:157px;width:21px;height:2px;background:linear-gradient(90deg,#00ff0a 0,#02ff09 3px,#2bff00 21px)"></i><i style="top:112px;left:157px;width:24px;height:2px;background:linear-gradient(90deg,#00ff0c 0,#01ff0b 2px,#34ff00 24px)"></i><i style="top:114px;left:156px;width:28px;height:2px;background:linear-gradient(90deg,#00ff0f 0,#00ff0e 2px,#3eff00 28px)"></i><i style="top:116px;left:155px;width:32px;height:2px;background:linear-gradient(90deg,#0f1 0,#02ff10 3px,#48ff00 32px)"></i><i style="top:118px;left:155px;width:35px;height:2px;background:linear-gradient(90deg,#00ff14 0,#14ff0e 10px,#53ff00 35px)"></i><i style="top:120px;left:154px;width:40px;height:2px;background:linear-gradient(90deg,#00ff16 0,#01ff15 2px,#1bff0f 13px,#61ff00 40px)"></i><i style="top:122px;left:153px;width:44px;height:2px;background:linear-gradient(90deg,#00ff19 0,#00ff18 2px,#1dff11 14px,#6cff00 44px)"></i><i style="top:124px;left:152px;width:48px;height:2px;background:linear-gradient(90deg,#00ff1c 0,#02ff1a 3px,#21ff13 16px,#78ff00 48px)"></i><i style="top:126px;left:152px;width:51px;height:2px;background:linear-gradient(90deg,#00ff1e 0,#01ff1d 2px,#30ff12 21px,#85ff00 51px)"></i><i style="top:128px;left:151px;width:55px;height:2px;background:linear-gradient(90deg,#00ff21 0,#00ff20 2px,#35ff14 23px,#92ff00 55px)"></i><i style="top:130px;left:150px;width:59px;height:2px;background:linear-gradient(90deg,#00ff24 0,#02ff22 3px,#3aff15 25px,#a0ff00 59px)"></i><i style="top:132px;left:150px;width:63px;height:2px;background:linear-gradient(90deg,#00ff27 0,#09ff24 5px,#48ff15 29px,#b1ff00 63px)"></i><i style="top:134px;left:149px;width:67px;height:2px;background:linear-gradient(90deg,#00ff2a 0,#08ff27 5px,#4dff17 31px,#84ff0b 49px,#c0ff00 67px)"></i><i style="top:136px;left:148px;width:71px;height:2px;background:linear-gradient(90deg,#00ff2d 0,#00ff2c 2px,#0aff29 6px,#53ff19 33px,#91ff0b 53px,#d0ff00 71px)"></i><i style="top:138px;left:148px;width:74px;height:2px;background:linear-gradient(90deg,#00ff2f 0,#02ff2e 2px,#1bff29 12px,#5fff1a 36px,#a0ff0c 56px,#e1ff00 74px)"></i><i style="top:140px;left:147px;width:78px;height:2px;background:linear-gradient(90deg,#0f3 0,#01ff32 2px,#1bff2c 12px,#66ff1c 38px,#abff0d 59px,#f2ff00 78px)"></i><i style="top:142px;left:146px;width:83px;height:2px;background:linear-gradient(90deg,#00ff36 0,#00ff35 2px,#10ff32 8px,#5dff21 35px,#a9ff11 58px,#fdff00 80px,#fff500 83px)"></i><i style="top:144px;left:145px;width:87px;height:2px;background:linear-gradient(90deg,#00ff39 0,#02ff38 3px,#17ff33 11px,#69ff22 39px,#b1ff13 60px,#ffff03 80px,#ffe400 87px)"></i><i style="top:146px;left:145px;width:90px;height:2px;background:linear-gradient(90deg,#00ff3c 0,#01ff3b 2px,#22ff35 14px,#6dff25 39px,#b2ff17 59px,#fdff08 78px,#ffd500 90px)"></i><i style="top:148px;left:144px;width:94px;height:2px;background:linear-gradient(90deg,#00ff40 0,#00ff3f 2px,#1bff39 12px,#6aff2a 38px,#b3ff1b 59px,#ffff0c 78px,#ffc700 94px)"></i><i style="top:150px;left:143px;width:98px;height:2px;background:linear-gradient(90deg,#0f4 0,#00ff43 2px,#15ff3e 10px,#67ff2e 37px,#b1ff20 58px,#fdff10 77px,#ffd706 88px,#ffba00 98px)"></i><i style="top:152px;left:143px;width:101px;height:2px;background:linear-gradient(90deg,#00ff47 0,#01ff46 2px,#23ff3f 14px,#6eff31 38px,#b2ff24 57px,#ffff15 76px,#ffd208 88px,#ffad00 101px)"></i><i style="top:154px;left:142px;width:106px;height:2px;background:linear-gradient(90deg,#00ff4b 0,#01ff4a 2px,#1dff44 12px,#6bff35 37px,#b3ff28 57px,#fdff1a 75px,#ffc90a 90px,#ffa000 106px)"></i><i style="top:156px;left:141px;width:110px;height:2px;background:linear-gradient(90deg,#00ff4e 0,#00ff4d 2px,#16ff49 10px,#68ff3a 36px,#b1ff2d 56px,#fffe1e 75px,#ffc40c 91px,#ff9600 110px)"></i><i style="top:158px;left:141px;width:113px;height:2px;background:linear-gradient(90deg,#00ff52 0,#02ff51 2px,#22ff4b 13px,#6cff3e 36px,#b2ff31 55px,#fdff23 73px,#ffbf0e 91px,#ff8c00 113px)"></i><i style="top:160px;left:140px;width:117px;height:2px;background:linear-gradient(90deg,#00ff56 0,#01ff55 2px,#1eff50 12px,#6cff42 36px,#afff36 54px,#fffe27 73px,#ffda1b 82px,#ffba11 92px,#ff9c07 104px,#ff8300 117px)"></i><i style="top:162px;left:139px;width:121px;height:2px;background:linear-gradient(90deg,#00ff5a 0,#00ff59 2px,#18ff55 10px,#69ff47 35px,#b0ff3a 54px,#feff2d 72px,#ffd41e 83px,#ffb312 94px,#ff9407 107px,#ff7a00 121px)"></i><i style="top:164px;left:138px;width:126px;height:2px;background:linear-gradient(90deg,#00ff5e 0,#00ff5d 2px,#11ff5a 8px,#66ff4c 34px,#aeff40 53px,#fffe31 72px,#ffd221 83px,#ffae14 95px,#ff8e09 109px,#ff7100 126px)"></i><i style="top:166px;left:138px;width:129px;height:2px;background:linear-gradient(90deg,#00ff62 0,#01ff61 2px,#20ff5c 12px,#6dff4f 35px,#b3ff44 53px,#feff37 70px,#ffd025 82px,#ffa916 95px,#ff8609 111px,#ff6a00 129px)"></i><i style="top:168px;left:137px;width:133px;height:2px;background:linear-gradient(90deg,#0f6 0,#00ff65 2px,#16ff62 9px,#6f5 33px,#acff4a 51px,#fffe3c 70px,#ffcd29 82px,#ffa419 96px,#ff810a 113px,#ff6300 133px)"></i><i style="top:170px;left:136px;width:137px;height:2px;background:linear-gradient(90deg,#00ff6b 0,#00ff6a 2px,#12ff67 8px,#66ff5a 33px,#b1ff4e 52px,#feff42 69px,#ffcb2d 82px,#ffa01b 97px,#ff7b0c 115px,#ff5c00 137px)"></i><i style="top:172px;left:136px;width:140px;height:2px;background:linear-gradient(90deg,#00ff6f 0,#02ff6e 2px,#1eff6a 11px,#6aff5e 33px,#aeff54 50px,#fffd47 68px,#ffc930 81px,#ff9b1d 97px,#ff750c 117px,#ff5600 140px)"></i><i style="top:174px;left:135px;width:145px;height:2px;background:linear-gradient(90deg,#00ff74 0,#01ff73 2px,#1aff6f 10px,#6bff63 33px,#b4ff59 51px,#feff4e 67px,#ffc333 82px,#ff951e 99px,#ff6e0c 120px,#ff4f00 145px)"></i><i style="top:176px;left:134px;width:149px;height:2px;background:linear-gradient(90deg,#00ff79 0,#00ff78 2px,#10ff75 7px,#64ff6a 31px,#a8ff60 48px,#fffd53 67px,#ffde44 74px,#ffc136 82px,#ff9020 100px,#ff690d 122px,#ff4900 149px)"></i><i style="top:178px;left:133px;width:153px;height:2px;background:linear-gradient(90deg,#00ff7d 0,#00ff7d 2px,#0cff7b 6px,#64ff6f 31px,#aeff65 49px,#ffff5a 66px,#ffdf4a 73px,#ffc13c 81px,#ff8e23 100px,#ff650e 124px,#f40 153px)"></i><i style="top:180px;left:133px;width:156px;height:2px;background:linear-gradient(90deg,#00ff82 0,#01ff81 2px,#18ff7e 9px,#68ff74 31px,#abff6b 47px,#fffd5f 65px,#ffd84d 73px,#ffbc3e 81px,#ff8824 101px,#ff600f 125px,#ff3f00 156px)"></i><i style="top:182px;left:132px;width:160px;height:2px;background:linear-gradient(90deg,#00ff87 0,#00ff86 2px,#14ff84 8px,#68ff79 31px,#b1ff70 48px,#ffff67 64px,#ffda53 72px,#ffbd44 80px,#ff9f34 90px,#ff8627 101px,#ff5c10 127px,#ff3a00 160px)"></i><i style="top:184px;left:131px;width:164px;height:2px;background:linear-gradient(90deg,#00ff8d 0,#00ff8c 2px,#09ff8b 5px,#61ff80 29px,#a5ff78 45px,#fffc6c 64px,#ffd757 72px,#ffb746 81px,#ff9a36 91px,#ff8229 102px,#ff5811 129px,#ff3600 164px)"></i><i style="top:186px;left:131px;width:168px;height:2px;background:linear-gradient(90deg,#00ff92 0,#02ff91 2px,#19ff8e 9px,#69ff85 30px,#afff7d 46px,#ffff74 62px,#ffd95e 70px,#ffb84b 79px,#ff983a 90px,#ff7e2b 102px,#ff5212 131px,#ff3100 168px)"></i><i style="top:188px;left:130px;width:172px;height:2px;background:linear-gradient(90deg,#00ff97 0,#01ff97 2px,#0eff95 6px,#61ff8c 28px,#a3ff85 43px,#fdff7b 61px,#fffc79 62px,#ffd663 70px,#ffb24e 80px,#ff933c 91px,#ff7a2c 103px,#ff4e13 133px,#ff2c00 172px)"></i><i style="top:190px;left:129px;width:176px;height:2px;background:linear-gradient(90deg,#00ff9d 0,#00ff9c 2px,#0dff9b 6px,#66ff92 29px,#adff8b 45px,#fffe82 61px,#ffd86a 69px,#ffb353 79px,#ff9440 90px,#ff782f 103px,#ff5f20 118px,#ff4a13 135px,#ff2900 176px)"></i><i style="top:192px;left:129px;width:179px;height:2px;background:linear-gradient(90deg,#00ffa3 0,#02ffa2 2px,#17ffa0 8px,#66ff98 28px,#a5ff92 42px,#fdff8a 59px,#fffb87 60px,#ffd16c 69px,#ffad55 79px,#ff8f42 90px,#ff7431 103px,#ff5c22 118px,#ff4614 136px,#ff2500 179px)"></i><i style="top:194px;left:128px;width:183px;height:2px;background:linear-gradient(90deg,#00ffa9 0,#01ffa8 2px,#13ffa6 7px,#66ff9f 28px,#acff99 43px,#fffe91 59px,#ffd274 68px,#ffae5c 78px,#ff8d46 90px,#ff7033 104px,#ff5723 120px,#ff4315 138px,#ff2100 183px)"></i><i style="top:196px;left:127px;width:188px;height:2px;background:linear-gradient(90deg,#00ffaf 0,#00ffae 2px,#07ffae 4px,#5effa7 26px,#9effa1 40px,#fdff99 58px,#fffb96 59px,#ffcf79 68px,#ffa85e 79px,#ff8848 91px,#ff6c35 105px,#ff5424 121px,#ff3f16 140px,#ff1d00 188px)"></i><i style="top:198px;left:126px;width:192px;height:2px;background:linear-gradient(90deg,#00ffb5 0,#02ffb5 3px,#5effae 26px,#aaffa8 42px,#fffea0 58px,#ffd180 67px,#ffa864 78px,#ff884d 90px,#ff6a38 105px,#ff5126 122px,#ff3c17 142px,#ff1a00 192px)"></i><i style="top:200px;left:126px;width:195px;height:2px;background:linear-gradient(90deg,#00ffbc 0,#01ffbb 2px,#10ffba 6px,#63ffb4 26px,#b0ffaf 42px,#feffaa 56px,#fffaa6 57px,#ffce85 66px,#ffa668 77px,#ff834f 90px,#ff6639 105px,#ff4d27 123px,#ff3818 143px,#ff1700 195px)"></i><i style="top:202px;left:125px;width:199px;height:2px;background:linear-gradient(90deg,#00ffc2 0,#00ffc2 2px,#0cffc1 5px,#63ffbc 26px,#a7ffb8 40px,#fffdb1 56px,#ffcb8b 66px,#ffa36c 77px,#ff8152 90px,#ff643c 105px,#ff4b29 123px,#ff3619 144px,#ff1300 199px)"></i><i style="top:204px;left:124px;width:203px;height:2px;background:linear-gradient(90deg,#00ffc9 0,#00ffc9 2px,#07ffc9 4px,#64ffc4 26px,#aeffbf 41px,#feffbb 55px,#ffcc93 65px,#ffa473 76px,#ff8158 89px,#ff623f 105px,#ff482b 124px,#ff321a 146px,#ff1000 203px)"></i><i style="top:206px;left:124px;width:206px;height:2px;background:linear-gradient(90deg,#00ffd0 0,#02ffd0 2px,#12ffcf 6px,#64ffcc 25px,#aaffc8 39px,#fffdc2 54px,#ffc998 64px,#ffa177 75px,#ff7c59 89px,#ff5e41 105px,#ff452c 124px,#ff2f1a 147px,#ff0e00 206px)"></i><i style="top:208px;left:123px;width:211px;height:2px;background:linear-gradient(90deg,#00ffd8 0,#01ffd8 2px,#0dffd7 5px,#64ffd4 25px,#acffd1 39px,#feffce 53px,#ffcba1 63px,#ff9e7c 75px,#ff7a5d 89px,#ff5c44 105px,#ff422e 125px,#ff2c1b 149px,#ff180a 181px,#ff0a00 211px)"></i><i style="top:210px;left:122px;width:215px;height:2px;background:linear-gradient(90deg,#00ffe0 0,#04ffdf 3px,#60ffdc 24px,#a3ffda 37px,#fffcd5 53px,#ffc8a7 63px,#ff9b80 75px,#ff7760 89px,#ff5846 106px,#ff3f2f 126px,#ff291c 151px,#ff150b 183px,#ff0800 215px)"></i><i style="top:212px;left:122px;width:218px;height:2px;background:linear-gradient(90deg,#00ffe7 0,#02ffe7 2px,#17ffe7 7px,#6affe5 25px,#b0ffe3 38px,#ffffe1 51px,#ffc9b0 61px,#ff9c87 73px,#ff7564 88px,#ff5648 105px,#ff3c31 126px,#ff271d 151px,#ff130c 184px,#ff0500 218px)"></i><i style="top:214px;left:121px;width:222px;height:2px;background:linear-gradient(90deg,#00fff0 0,#01ffef 2px,#0affef 4px,#61ffee 23px,#a6ffed 36px,#fffce9 51px,#ffc6b6 61px,#ff998c 73px,#ff7268 88px,#ff534a 106px,#ff3932 127px,#ff241e 153px,#ff100c 187px,#ff0300 222px)"></i><i style="top:216px;left:120px;width:226px;height:2px;background:linear-gradient(90deg,#00fff8 0,#04fff8 3px,#61fff7 23px,#adfff7 37px,#fffff7 50px,#ffc7c0 60px,#ff9691 73px,#ff706b 88px,#ff514d 106px,#ff3634 128px,#ff211e 155px,#ff0e0c 190px,#f00 226px)"></i><i style="top:218px;left:119px;width:228px;height:2px;background:linear-gradient(90deg,#00fdff 0,#03fdff 3px,#5bfdff 22px,#a8fdff 36px,#fffbfe 50px,#ffc4c6 60px,#ff9395 73px,#ff6d6f 88px,#ff4e50 106px,#ff3435 129px,#ff1e1f 157px,#ff0b0c 193px,#f00 228px)"></i><i style="top:220px;left:119px;width:223px;height:2px;background:linear-gradient(90deg,#00f5ff 0,#02f5ff 2px,#0ef4ff 5px,#67f3ff 24px,#aef2ff 37px,#fff1ff 50px,#ffbcc8 60px,#ff909a 72px,#ff6b73 87px,#ff4c53 105px,#ff3338 127px,#ff1e23 153px,#ff0c10 188px,#ff0002 223px)"></i><i style="top:222px;left:118px;width:220px;height:2px;background:linear-gradient(90deg,#00ecff 0,#00ecff 2px,#09ecff 4px,#64eaff 24px,#afe8ff 38px,#fee7ff 51px,#ffb0c4 62px,#ff8898 74px,#ff6472 89px,#ff4955 106px,#ff313b 127px,#ff1d25 153px,#ff0a11 188px,#ff0005 220px)"></i><i style="top:224px;left:117px;width:216px;height:2px;background:linear-gradient(90deg,#00e4ff 0,#03e4ff 3px,#5ce1ff 23px,#aadfff 38px,#fedcff 52px,#ffd8fa 53px,#ffa9c6 63px,#ff829a 75px,#ff6276 89px,#ff4658 106px,#ff303e 126px,#ff1c28 151px,#ff0b15 184px,#ff0007 216px)"></i><i style="top:226px;left:117px;width:211px;height:2px;background:linear-gradient(90deg,#0df 0,#02dcff 2px,#12dcff 6px,#62d8ff 24px,#aad6ff 38px,#fdd2ff 52px,#ffcffb 53px,#ffa2c7 63px,#ff7c9b 75px,#ff5d78 89px,#ff445b 105px,#ff2e41 125px,#ff1b2b 149px,#ff0a17 181px,#ff000a 211px)"></i><i style="top:228px;left:116px;width:208px;height:2px;background:linear-gradient(90deg,#00d5ff 0,#01d5ff 2px,#09d4ff 4px,#5fd0ff 24px,#a0cdff 37px,#fcc9ff 53px,#ffc6fc 54px,#ff9bc8 64px,#ff779d 76px,#ff5979 90px,#ff415c 106px,#ff2c43 125px,#ff1a2e 148px,#ff0919 180px,#ff000d 208px)"></i><i style="top:230px;left:115px;width:204px;height:2px;background:linear-gradient(90deg,#00ceff 0,#04cdff 3px,#61c8ff 25px,#a6c4ff 39px,#ffbdfc 55px,#ff94c9 65px,#ff74a1 76px,#ff587f 89px,#ff4061 105px,#ff2b47 124px,#ff1a32 146px,#ff0010 204px)"></i><i style="top:232px;left:115px;width:200px;height:2px;background:linear-gradient(90deg,#00c7ff 0,#02c6ff 2px,#16c5ff 7px,#67c0ff 26px,#acbcff 40px,#ffb5fd 55px,#ff8ecb 65px,#ff6fa3 76px,#ff5480 89px,#ff3c62 105px,#ff2949 123px,#ff1834 145px,#ff0012 200px)"></i><i style="top:234px;left:114px;width:196px;height:2px;background:linear-gradient(90deg,#00c0ff 0,#01bfff 2px,#10beff 6px,#64b8ff 26px,#adb3ff 41px,#ffadfe 56px,#ff8ad0 65px,#ff6ca7 76px,#ff5184 89px,#ff3b67 104px,#ff284d 122px,#ff1838 143px,#ff0016 196px)"></i><i style="top:236px;left:113px;width:192px;height:2px;background:linear-gradient(90deg,#00b9ff 0,#00b9ff 2px,#0bb8ff 5px,#65b1ff 27px,#adabff 42px,#ffa5ff 57px,#ff84d1 66px,#ff67a9 77px,#ff4f88 89px,#ff396a 104px,#ff2751 121px,#ff183c 141px,#ff0019 192px)"></i><i style="top:238px;left:112px;width:189px;height:2px;background:linear-gradient(90deg,#00b3ff 0,#00b2ff 2px,#06b2ff 4px,#62aaff 27px,#aea4ff 43px,#ff9dff 58px,#ff7ed2 67px,#ff61aa 78px,#ff4b89 90px,#ff376d 104px,#ff2554 121px,#ff173f 140px,#ff001c 189px)"></i><i style="top:240px;left:112px;width:184px;height:2px;background:linear-gradient(90deg,#00acff 0,#02acff 2px,#17aaff 8px,#68a2ff 28px,#ae9cff 43px,#fe95ff 58px,#ff78d3 67px,#ff5fae 77px,#ff488d 89px,#ff3570 103px,#ff2458 119px,#ff1542 138px,#ff0020 184px)"></i><i style="top:242px;left:111px;width:181px;height:2px;background:linear-gradient(90deg,#00a6ff 0,#00a6ff 2px,#0ba5ff 5px,#619cff 27px,#a096ff 41px,#fd8dff 59px,#ff8bfb 60px,#ff6fd0 69px,#ff57ac 79px,#ff428c 91px,#ff3171 104px,#ff225a 119px,#ff1445 137px,#ff0023 181px)"></i><i style="top:244px;left:110px;width:177px;height:2px;background:linear-gradient(90deg,#00a0ff 0,#00a0ff 2px,#069fff 4px,#5e96ff 27px,#a18fff 42px,#fd86ff 60px,#ff84fc 61px,#ff69d1 70px,#ff53ae 80px,#ff4090 91px,#ff2f75 104px,#ff205d 119px,#ff1348 136px,#ff0027 177px)"></i><i style="top:246px;left:110px;width:172px;height:2px;background:linear-gradient(90deg,#009aff 0,#029aff 2px,#1a97ff 9px,#688fff 29px,#ab87ff 44px,#ff7dfc 61px,#ff66d6 69px,#ff50b2 79px,#ff3d93 90px,#ff2e7a 102px,#ff134e 132px,#ff002c 172px)"></i><i style="top:248px;left:109px;width:169px;height:2px;background:linear-gradient(90deg,#0095ff 0,#0194ff 2px,#1292ff 7px,#6589ff 29px,#ab81ff 45px,#ff76fd 62px,#ff60d7 70px,#ff4db6 79px,#ff3b97 90px,#ff2b7d 102px,#ff1252 131px,#ff002f 169px)"></i><i style="top:250px;left:108px;width:165px;height:2px;background:linear-gradient(90deg,#0090ff 0,#008fff 2px,#0d8dff 6px,#6283ff 29px,#ac7aff 46px,#ff6ffe 63px,#ff5ad8 71px,#ff48b8 80px,#ff389b 90px,#ff2980 102px,#f15 130px,#ff0034 165px)"></i><i style="top:252px;left:108px;width:161px;height:2px;background:linear-gradient(90deg,#008aff 0,#0289ff 2px,#1d86ff 10px,#6c7cff 31px,#b173ff 47px,#ff69fe 63px,#ff55d9 71px,#ff43b9 80px,#ff349c 90px,#ff2783 101px,#ff105a 127px,#ff0038 161px)"></i><i style="top:254px;left:107px;width:157px;height:2px;background:linear-gradient(90deg,#0085ff 0,#0184ff 2px,#1881ff 9px,#6976ff 31px,#b16dff 48px,#ff63ff 64px,#ff50da 72px,#ff41bd 80px,#ff2589 100px,#ff105f 125px,#ff003d 157px)"></i><i style="top:256px;left:106px;width:154px;height:2px;background:linear-gradient(90deg,#0080ff 0,#007fff 2px,#107dff 7px,#6671ff 31px,#b267ff 49px,#fe5cff 65px,#ff4adb 73px,#ff3cbe 81px,#ff238c 100px,#ff0f63 124px,#ff0042 154px)"></i><i style="top:258px;left:105px;width:150px;height:2px;background:linear-gradient(90deg,#007bff 0,#007aff 2px,#0c79ff 6px,#646cff 31px,#ae62ff 49px,#fe56ff 66px,#ff45dc 74px,#ff37bf 82px,#ff218f 100px,#ff0e68 122px,#ff0048 150px)"></i><i style="top:260px;left:105px;width:145px;height:2px;background:linear-gradient(90deg,#0076ff 0,#0175ff 2px,#1872ff 9px,#6567ff 31px,#a65dff 47px,#ff4ffc 67px,#ff35c3 81px,#ff1f95 98px,#ff0d6e 119px,#ff004e 145px)"></i><i style="top:262px;left:104px;width:142px;height:2px;background:linear-gradient(90deg,#0072ff 0,#0071ff 2px,#136eff 8px,#6661ff 32px,#a658ff 48px,#ff49fc 68px,#ff30c4 82px,#ff1d98 98px,#ff0c72 118px,#ff0053 142px)"></i><i style="top:264px;left:103px;width:138px;height:2px;background:linear-gradient(90deg,#006dff 0,#006cff 2px,#0f6aff 7px,#645dff 32px,#a752ff 49px,#ff43fd 69px,#ff2dc9 82px,#ff1b9e 97px,#ff0b78 116px,#ff005a 138px)"></i><i style="top:266px;left:103px;width:134px;height:2px;background:linear-gradient(90deg,#0068ff 0,#0267ff 2px,#1d63ff 11px,#6957ff 33px,#ab4cff 50px,#ff3efe 69px,#ff2acd 81px,#ff19a2 96px,#ff0a7f 113px,#ff0060 134px)"></i><i style="top:268px;left:102px;width:130px;height:2px;background:linear-gradient(90deg,#0064ff 0,#0163ff 2px,#195fff 10px,#6a52ff 34px,#b046ff 52px,#ff39fe 70px,#ff26ce 82px,#ff17a8 95px,#ff0a85 111px,#ff0067 130px)"></i><i style="top:270px;left:101px;width:126px;height:2px;background:linear-gradient(90deg,#0060ff 0,#005fff 2px,#155cff 9px,#674dff 34px,#b041ff 53px,#ff34ff 71px,#ff23d2 82px,#ff15ae 94px,#ff098c 109px,#ff006f 126px)"></i><i style="top:272px;left:100px;width:123px;height:2px;background:linear-gradient(90deg,#005cff 0,#025bff 3px,#0e59ff 7px,#6549ff 34px,#b13cff 54px,#ff2eff 72px,#ff20d7 82px,#ff13b2 94px,#ff0791 108px,#f07 123px)"></i><i style="top:274px;left:100px;width:118px;height:2px;background:linear-gradient(90deg,#0058ff 0,#0157ff 2px,#1b52ff 11px,#6a44ff 35px,#b137ff 54px,#fe29ff 72px,#ff1cd8 82px,#ff11b8 92px,#ff079b 104px,#ff0080 118px)"></i><i style="top:276px;left:99px;width:115px;height:2px;background:linear-gradient(90deg,#0054ff 0,#0053ff 2px,#174fff 10px,#6b3fff 36px,#b132ff 55px,#fe25ff 73px,#ff18d8 83px,#ff0ebc 92px,#f08 115px)"></i><i style="top:278px;left:98px;width:111px;height:2px;background:linear-gradient(90deg,#0050ff 0,#004fff 2px,#134bff 9px,#683cff 36px,#b22eff 56px,#fd20ff 74px,#ff0dc3 91px,#ff0092 111px)"></i><i style="top:280px;left:98px;width:106px;height:2px;background:linear-gradient(90deg,#004cff 0,#014bff 2px,#1e46ff 12px,#6937ff 36px,#aa2bff 54px,#ff1afd 75px,#ff0bca 89px,#ff009e 106px)"></i><i style="top:282px;left:97px;width:103px;height:2px;background:linear-gradient(90deg,#0049ff 0,#0048ff 2px,#1a43ff 11px,#6733ff 36px,#ab26ff 55px,#ff15fe 76px,#ff09d1 88px,#ff00a8 103px)"></i><i style="top:284px;left:96px;width:99px;height:2px;background:linear-gradient(90deg,#0045ff 0,#04f 2px,#1640ff 10px,#682fff 37px,#af21ff 57px,#fc12ff 76px,#ff11fe 77px,#ff05d2 89px,#ff00b5 99px)"></i><i style="top:286px;left:96px;width:95px;height:2px;background:linear-gradient(90deg,#0041ff 0,#0240ff 2px,#2339ff 14px,#6d2aff 38px,#b31cff 58px,#ff0dff 77px,#ff04dc 86px,#ff00c0 95px)"></i><i style="top:288px;left:95px;width:91px;height:2px;background:linear-gradient(90deg,#003eff 0,#013dff 2px,#1f37ff 13px,#6e26ff 39px,#b318ff 59px,#ff08ff 78px,#ff00d0 91px)"></i><i style="top:290px;left:94px;width:88px;height:2px;background:linear-gradient(90deg,#003bff 0,#003aff 2px,#1b34ff 12px,#6b23ff 39px,#b414ff 60px,#fe04ff 79px,#ff00de 88px)"></i><i style="top:292px;left:93px;width:84px;height:2px;background:linear-gradient(90deg,#0038ff 0,#0236ff 3px,#1432ff 10px,#6920ff 39px,#b011ff 60px,#fe00ff 80px,#ff00f0 84px)"></i><i style="top:294px;left:93px;width:79px;height:2px;background:linear-gradient(90deg,#0034ff 0,#0133ff 2px,#1e2dff 13px,#6a1cff 39px,#b10dff 60px,#f900ff 79px)"></i><i style="top:296px;left:92px;width:76px;height:2px;background:linear-gradient(90deg,#0031ff 0,#0030ff 2px,#152bff 10px,#621aff 37px,#a30cff 57px,#e900ff 76px)"></i><i style="top:298px;left:91px;width:72px;height:2px;background:linear-gradient(90deg,#002eff 0,#072bff 5px,#541aff 33px,#930cff 53px,#d600ff 72px)"></i><i style="top:300px;left:91px;width:68px;height:2px;background:linear-gradient(90deg,#002bff 0,#1026ff 8px,#5217ff 32px,#890bff 50px,#c700ff 68px)"></i><i style="top:302px;left:90px;width:64px;height:2px;background:linear-gradient(90deg,#0028ff 0,#0326ff 3px,#4816ff 29px,#b600ff 64px)"></i><i style="top:304px;left:89px;width:60px;height:2px;background:linear-gradient(90deg,#0025ff 0,#0223ff 3px,#3e15ff 26px,#a500ff 60px)"></i><i style="top:306px;left:89px;width:56px;height:2px;background:linear-gradient(90deg,#02f 0,#0121ff 2px,#3c13ff 25px,#9800ff 56px)"></i><i style="top:308px;left:88px;width:52px;height:2px;background:linear-gradient(90deg,#001fff 0,#011eff 2px,#3013ff 21px,#8900ff 52px)"></i><i style="top:310px;left:87px;width:49px;height:2px;background:linear-gradient(90deg,#001cff 0,#001bff 2px,#2712ff 18px,#7d00ff 49px)"></i><i style="top:312px;left:86px;width:45px;height:2px;background:linear-gradient(90deg,#001aff 0,#0218ff 3px,#1c12ff 14px,#6f00ff 45px)"></i><i style="top:314px;left:86px;width:40px;height:2px;background:linear-gradient(90deg,#0017ff 0,#0116ff 2px,#1b0fff 13px,#6200ff 40px)"></i><i style="top:316px;left:85px;width:37px;height:2px;background:linear-gradient(90deg,#0014ff 0,#0013ff 2px,#110fff 9px,#5800ff 37px)"></i><i style="top:318px;left:84px;width:33px;height:2px;background:linear-gradient(90deg,#0012ff 0,#0410ff 4px,#4b00ff 33px)"></i><i style="top:320px;left:84px;width:29px;height:2px;background:linear-gradient(90deg,#000fff 0,#080cff 5px,#4200ff 29px)"></i><i style="top:322px;left:83px;width:25px;height:2px;background:linear-gradient(90deg,#000dff 0,#010cff 2px,#3700ff 25px)"></i><i style="top:324px;left:82px;width:22px;height:2px;background:linear-gradient(90deg,#000bff 0,#0209ff 3px,#2e00ff 22px)"></i><i style="top:326px;left:82px;width:17px;height:2px;background:linear-gradient(90deg,#0008ff 0,#2300ff 17px)"></i><i style="top:328px;left:81px;width:13px;height:2px;background:linear-gradient(90deg,#0006ff 0,#0104ff 2px,#1900ff 13px)"></i><i style="top:330px;left:80px;width:10px;height:2px;background:linear-gradient(90deg,#0003ff 0,#0002ff 2px,#1200ff 10px)"></i><i style="top:332px;left:80px;width:5px;height:2px;background:linear-gradient(90deg,#0001ff 0,#0800ff 5px)"></i></div>
<div style="position:absolute;left:1025px;top:30px;width:129px;height:131px;overflow:hidden;background:#252525">
<div class="c" style="left:0;top:0;width:129px;height:131px;clip-path:polygon(-306.4px 832.4px,-306.4px 832.4px,-306.4px 832.4px,-306.5px 832.3px,-306.5px 832.3px,-306.5px 832.4px,-306.6px 832.4px,-306.6px 832.4px,-306.6px 832.4px,-306.7px 832.4px,-306.7px 832.5px,-306.8px 832.5px,-306.9px 832.5px,-306.9px 832.5px,-306.9px 832.5px,-307.0px 832.5px,-307.0px 832.5px,-307.1px 832.5px,-307.1px 832.5px,-307.2px 832.5px,-307.3px 832.6px,-307.4px 832.6px,-307.4px 832.6px,-307.5px 832.6px,-307.6px 832.7px,-307.7px 832.7px,-307.7px 832.7px,-307.8px 832.7px,-307.9px 832.7px,-308.0px 832.7px,-308.1px 832.7px,-308.1px 832.7px,-308.2px 832.7px,-308.3px 832.7px,-308.4px 832.7px,-308.5px 832.7px,-308.7px 832.7px,-308.8px 832.7px,-308.9px 832.7px,-309.0px 832.7px,-309.1px 832.7px,-309.3px 832.7px,-309.4px 832.7px,-309.6px 832.6px,-309.7px 832.6px,-309.9px 832.5px,-310.0px 832.4px,-310.2px 832.3px,-310.5px 832.2px,-310.7px 832.1px,-310.9px 831.9px,-311.2px 831.7px,-311.5px 831.6px,-311.8px 831.4px,-312.1px 831.1px,-312.4px 830.9px,-312.7px 830.7px,-313.1px 830.4px,-313.4px 830.1px,-313.8px 829.8px,-314.2px 829.5px,-314.6px 829.1px,-315.1px 828.7px,-315.6px 828.3px,-316.1px 827.8px,-316.6px 827.3px,-317.2px 826.9px,-317.8px 826.3px,-318.4px 825.8px,-319.0px 825.2px,-319.6px 824.6px,-320.2px 824.0px,-321.0px 823.3px,-321.7px 822.7px,-322.4px 822.0px,-323.2px 821.3px,-324.1px 820.5px,-325.0px 819.7px,-325.9px 818.9px,-326.9px 818.0px,-328.0px 817.1px,-329.1px 816.1px,-330.2px 815.1px,-331.4px 814.0px,-332.7px 812.9px,-333.9px 811.8px,-335.3px 810.6px,-336.6px 809.4px,-338.0px 808.1px,-339.5px 806.7px,-341.1px 805.3px,-342.7px 803.7px,-344.3px 802.1px,-346.0px 800.4px,-347.8px 798.6px,-349.6px 796.7px,-351.6px 794.6px,-353.5px 792.4px,-355.5px 790.2px,-357.5px 787.8px,-359.6px 785.2px,-361.9px 782.3px,-364.3px 779.0px,-366.8px 775.3px,-369.5px 771.3px,-372.3px 767.1px,-375.2px 762.4px,-378.2px 757.3px,-381.4px 751.6px,-384.7px 745.5px,-388.1px 739.0px,-391.6px 732.1px,-395.3px 724.5px,-399.1px 716.3px,-403.2px 707.2px,-407.3px 697.4px,-411.6px 687.0px,-416.1px 675.8px,-420.8px 663.8px,-425.6px 650.9px,-430.6px 637.0px,-435.9px 622.1px,-441.4px 606.3px,-447.1px 589.6px,-452.9px 571.9px,-458.7px 553.0px,-464.5px 532.9px,-470.3px 511.6px,-476.2px 489.2px,-482.0px 465.6px,-487.9px 440.9px,-493.7px 415.2px,-499.5px 388.7px,-505.2px 360.9px,-510.9px 331.7px,-516.6px 301.6px,-522.2px 270.8px,-527.4px 239.7px,-532.3px 208.6px,-536.9px 177.1px,-541.3px 144.9px,-545.4px 112.3px,-549.2px 79.8px,-552.5px 47.6px,-555.2px 16.3px,-557.5px -14.6px,-559.4px -45.4px,-560.8px -75.7px,-561.8px -105.4px,-562.1px -134.2px,-561.7px -161.8px,-560.7px -188.6px,-559.1px -214.8px,-556.9px -240.0px,-554.2px -264.1px,-550.8px -286.8px,-546.7px -307.8px,-541.9px -327.2px,-536.4px -345.4px,-530.3px -362.1px,-523.7px -377.3px,-516.6px -390.7px,-509.2px -402.4px,-501.3px -412.0px,-492.9px -419.7px,-484.0px -425.7px,-474.9px -430.2px,-465.5px -433.5px,-456.1px -435.7px,-446.5px -436.6px,-436.7px -435.9px,-426.7px -433.9px,-416.5px -431.1px,-406.4px -427.7px,-396.3px -424.1px,-386.1px -420.1px,-375.9px -415.4px,-365.7px -410.1px,-355.5px -404.5px,-345.4px -398.8px,-335.5px -393.0px,-325.7px -387.2px,-316.1px -381.2px,-306.5px -375.1px,-297.0px -368.8px,-287.6px -362.4px,-278.2px -355.8px,-268.9px -349.2px,-259.7px -342.4px,-250.5px -335.5px,-241.4px -328.5px,-232.3px -321.3px,-223.2px -314.1px,-214.0px -306.7px,-205.0px -299.2px,-195.9px -291.6px,-186.9px -283.8px,-177.9px -276.0px,-168.9px -268.2px,-159.9px -260.2px,-150.9px -252.2px,-142.0px -244.0px,-133.0px -235.8px,-124.1px -227.5px,-115.2px -219.2px,-106.2px -210.8px,-97.3px -202.4px,-88.4px -193.9px,-79.5px -185.3px,-70.5px -176.7px,-61.6px -168.1px,-52.7px -159.4px,-43.7px -150.7px,-34.7px -141.9px,-25.8px -133.1px,-16.8px -124.3px,-7.9px -115.5px,1.0px -106.6px,9.9px -97.7px,18.8px -88.8px,27.7px -79.9px,36.6px -71.0px,45.5px -62.1px,54.4px -53.2px,63.3px -44.3px,72.1px -35.3px,81.0px -26.4px,89.8px -17.5px,98.6px -8.7px,107.4px 0.2px,116.1px 9.0px,124.8px 17.8px,133.4px 26.6px,142.1px 35.4px,150.6px 44.1px,159.2px 52.8px,167.7px 61.4px,176.1px 70.0px,184.6px 78.6px,192.9px 87.1px,201.2px 95.5px,209.4px 103.9px,217.6px 112.2px,225.7px 120.5px,233.8px 128.7px,241.8px 136.8px,249.6px 144.8px,257.5px 152.7px,265.2px 160.5px,272.9px 168.3px,280.5px 176.0px,287.9px 183.5px,295.2px 191.0px,302.5px 198.3px,309.6px 205.6px,316.6px 212.8px,323.5px 219.8px,330.2px 226.7px,336.8px 233.4px,343.2px 239.9px,349.4px 246.2px,355.5px 252.4px,361.4px 258.4px,367.2px 264.3px,372.9px 270.1px,378.6px 275.8px,384.1px 281.4px,389.5px 286.9px,394.7px 292.2px,399.8px 297.4px,404.7px 302.4px,409.5px 307.2px,414.1px 311.8px,418.6px 316.3px,422.9px 320.7px,427.1px 324.9px,431.1px 329.0px,435.1px 333.0px,438.8px 336.8px,442.5px 340.5px,446.0px 344.1px,449.3px 347.5px,452.6px 350.9px,455.7px 354.1px,458.7px 357.1px,461.6px 360.1px,464.4px 362.9px,467.1px 365.7px,469.7px 368.3px,472.2px 370.8px,474.6px 373.3px,476.9px 375.6px,479.1px 377.8px,481.3px 380.0px,483.3px 382.1px,485.4px 384.1px,487.3px 386.1px,489.1px 387.9px,490.9px 389.8px,492.6px 391.5px,494.3px 393.2px,495.9px 394.9px,497.5px 396.6px,499.1px 398.1px,500.6px 399.7px,502.0px 401.1px,503.4px 402.6px,504.8px 404.0px,506.1px 405.3px,507.4px 406.6px,508.6px 407.9px,509.8px 409.1px,510.9px 410.2px,512.1px 411.3px,513.1px 412.4px,514.1px 413.4px,515.1px 414.4px,516.1px 415.3px,516.9px 416.2px,517.8px 417.1px,518.6px 417.9px,519.4px 418.6px,520.1px 419.4px,520.8px 420.1px,521.4px 420.8px,522.1px 421.4px,522.7px 422.1px,523.3px 422.7px,523.9px 423.2px,524.4px 423.8px,524.9px 424.3px,525.4px 424.8px,525.8px 425.2px,526.2px 425.6px,526.6px 426.0px,527.0px 426.5px,527.4px 426.9px,527.9px 427.4px,528.4px 427.9px,529.0px 428.5px,529.5px 429.0px,530.0px 429.5px,530.4px 430.0px,530.9px 430.4px,531.2px 430.8px,531.6px 431.1px,531.9px 431.5px,532.2px 431.8px,532.5px 432.1px,532.8px 432.4px,533.1px 432.7px,533.4px 433.0px,533.6px 433.2px,533.9px 433.5px,534.0px 433.6px,534.2px 433.8px,534.3px 433.9px,534.4px 434.0px,534.4px 434.0px,534.5px 434.1px,534.5px 434.1px)"><i style="top:0px;left:0px;width:129px;height:3px;background:linear-gradient(90deg,#4f9900 0,#990 101px,#998500 129px)"></i><i style="top:3px;left:0px;width:129px;height:3px;background:linear-gradient(90deg,#509900 0,#990 99px,#998400 129px)"></i><i style="top:6px;left:0px;width:129px;height:3px;background:linear-gradient(90deg,#519900 0,#989900 97px,#998200 129px)"></i><i style="top:9px;left:0px;width:129px;height:3px;background:linear-gradient(90deg,#529900 0,#990 96px,#998100 129px)"></i><i style="top:12px;left:0px;width:129px;height:3px;background:linear-gradient(90deg,#539900 0,#990 94px,#998000 129px)"></i><i style="top:15px;left:0px;width:129px;height:3px;background:linear-gradient(90deg,#549901 0,#990 92px,#997f00 129px)"></i><i style="top:18px;left:0px;width:129px;height:3px;background:linear-gradient(90deg,#559901 0,#990 90px,#997d00 129px)"></i><i style="top:21px;left:0px;width:129px;height:3px;background:linear-gradient(90deg,#569902 0,#990 89px,#997c00 129px)"></i><i style="top:24px;left:0px;width:129px;height:3px;background:linear-gradient(90deg,#579903 0,#990 87px,#997b00 129px)"></i><i style="top:27px;left:0px;width:129px;height:3px;background:linear-gradient(90deg,#589903 0,#990 85px,#997a00 129px)"></i><i style="top:30px;left:0px;width:129px;height:3px;background:linear-gradient(90deg,#599904 0,#990 83px,#997900 129px)"></i><i style="top:33px;left:0px;width:129px;height:3px;background:linear-gradient(90deg,#5a9904 0,#990 82px,#997800 129px)"></i><i style="top:36px;left:0px;width:129px;height:3px;background:linear-gradient(90deg,#5b9905 0,#719900 31px,#990 80px,#997600 129px)"></i><i style="top:39px;left:0px;width:129px;height:3px;background:linear-gradient(90deg,#5c9906 0,#759900 34px,#990 78px,#997500 129px)"></i><i style="top:42px;left:0px;width:129px;height:3px;background:linear-gradient(90deg,#5d9906 0,#799900 38px,#990 76px,#997400 129px)"></i><i style="top:45px;left:0px;width:129px;height:3px;background:linear-gradient(90deg,#5e9907 0,#7d9900 41px,#990 75px,#997300 129px)"></i><i style="top:48px;left:0px;width:129px;height:3px;background:linear-gradient(90deg,#5f9908 0,#990 73px,#997200 129px)"></i><i style="top:51px;left:0px;width:129px;height:3px;background:linear-gradient(90deg,#609908 0,#990 71px,#997100 129px)"></i><i style="top:54px;left:0px;width:129px;height:3px;background:linear-gradient(90deg,#619909 0,#990 69px,#997000 129px)"></i><i style="top:57px;left:0px;width:129px;height:3px;background:linear-gradient(90deg,#62990a 0,#990 67px,#996f00 129px)"></i><i style="top:60px;left:0px;width:129px;height:3px;background:linear-gradient(90deg,#63990a 0,#990 66px,#996d00 129px)"></i><i style="top:63px;left:0px;width:129px;height:3px;background:linear-gradient(90deg,#64990b 0,#990 64px,#996c00 129px)"></i><i style="top:66px;left:0px;width:129px;height:3px;background:linear-gradient(90deg,#65990c 0,#999901 62px,#998100 93px,#996b00 129px)"></i><i style="top:69px;left:0px;width:129px;height:3px;background:linear-gradient(90deg,#67990d 0,#999902 60px,#998000 93px,#996a00 129px)"></i><i style="top:72px;left:0px;width:129px;height:3px;background:linear-gradient(90deg,#68990d 0,#999903 59px,#997f00 92px,#996900 129px)"></i><i style="top:75px;left:0px;width:129px;height:3px;background:linear-gradient(90deg,#69990e 0,#999904 57px,#997f00 90px,#996800 129px)"></i><i style="top:78px;left:0px;width:129px;height:3px;background:linear-gradient(90deg,#6a990f 0,#999905 55px,#997e00 89px,#996700 129px)"></i><i style="top:81px;left:0px;width:129px;height:3px;background:linear-gradient(90deg,#6b9910 0,#999906 53px,#997d00 89px,#960 129px)"></i><i style="top:84px;left:0px;width:129px;height:3px;background:linear-gradient(90deg,#6d9910 0,#999807 52px,#997c00 88px,#996500 129px)"></i><i style="top:87px;left:0px;width:129px;height:3px;background:linear-gradient(90deg,#6e9911 0,#999908 50px,#997c01 86px,#996400 129px)"></i><i style="top:90px;left:0px;width:129px;height:3px;background:linear-gradient(90deg,#6f9912 0,#99990a 48px,#997c02 85px,#996300 129px)"></i><i style="top:93px;left:0px;width:129px;height:3px;background:linear-gradient(90deg,#719913 0,#99990b 46px,#997b03 84px,#996200 129px)"></i><i style="top:96px;left:0px;width:129px;height:3px;background:linear-gradient(90deg,#729913 0,#99990c 44px,#997b04 83px,#996100 129px)"></i><i style="top:99px;left:0px;width:129px;height:3px;background:linear-gradient(90deg,#739914 0,#99990d 43px,#997a04 82px,#996000 129px)"></i><i style="top:102px;left:0px;width:129px;height:3px;background:linear-gradient(90deg,#749915 0,#99990e 41px,#997905 81px,#995f00 129px)"></i><i style="top:105px;left:0px;width:129px;height:3px;background:linear-gradient(90deg,#769916 0,#99990f 39px,#997906 80px,#995e00 129px)"></i><i style="top:108px;left:0px;width:129px;height:3px;background:linear-gradient(90deg,#779917 0,#991 37px,#997807 79px,#995d00 129px)"></i><i style="top:111px;left:0px;width:129px;height:3px;background:linear-gradient(90deg,#799918 0,#999812 36px,#997708 78px,#995c00 129px)"></i><i style="top:114px;left:0px;width:129px;height:3px;background:linear-gradient(90deg,#7a9919 0,#999913 34px,#997708 77px,#995b00 129px)"></i><i style="top:117px;left:0px;width:129px;height:3px;background:linear-gradient(90deg,#7b9919 0,#999914 32px,#997609 76px,#995a00 129px)"></i><i style="top:120px;left:0px;width:129px;height:3px;background:linear-gradient(90deg,#7d991a 0,#999915 30px,#99750a 75px,#995901 129px)"></i><i style="top:123px;left:0px;width:129px;height:3px;background:linear-gradient(90deg,#7e991b 0,#999816 29px,#99750b 74px,#995801 129px)"></i><i style="top:126px;left:0px;width:129px;height:3px;background:linear-gradient(90deg,#80991c 0,#999918 27px,#99740b 73px,#995702 129px)"></i><i style="top:129px;left:0px;width:129px;height:2px;background:linear-gradient(90deg,#81991d 0,#999919 25px,#99740c 72px,#995602 129px)"></i></div>
<div class="c" style="left:0;top:0;width:129px;height:131px;clip-path:polygon(394.8px 332.7px,-115.2px -80.4px,-340.2px 745.8px)"><i style="top:0px;left:0px;width:129px;height:3px;background:linear-gradient(90deg,#84ff00 0,#c0ff00 52px,#ff0 101px,#fd0 129px)"></i><i style="top:3px;left:0px;width:129px;height:3px;background:linear-gradient(90deg,#85ff00 0,#c0ff00 51px,#feff00 99px,#ffdb00 129px)"></i><i style="top:6px;left:0px;width:129px;height:3px;background:linear-gradient(90deg,#87ff00 0,#c1ff00 50px,#feff00 97px,#ffd900 129px)"></i><i style="top:9px;left:0px;width:129px;height:3px;background:linear-gradient(90deg,#8f0 0,#c2ff00 49px,#ff0 96px,#ffd700 129px)"></i><i style="top:12px;left:0px;width:129px;height:3px;background:linear-gradient(90deg,#8aff00 0,#c3ff00 48px,#ff0 94px,#ffd500 129px)"></i><i style="top:15px;left:0px;width:129px;height:3px;background:linear-gradient(90deg,#8bff01 0,#ff0 92px,#ffd300 129px)"></i><i style="top:18px;left:0px;width:129px;height:3px;background:linear-gradient(90deg,#8dff02 0,#feff00 90px,#ffd100 129px)"></i><i style="top:21px;left:0px;width:129px;height:3px;background:linear-gradient(90deg,#8fff03 0,#ff0 89px,#ffcf00 129px)"></i><i style="top:24px;left:0px;width:129px;height:3px;background:linear-gradient(90deg,#90ff04 0,#a3ff00 16px,#ff0 87px,#ffcd00 129px)"></i><i style="top:27px;left:0px;width:129px;height:3px;background:linear-gradient(90deg,#92ff05 0,#af0 20px,#ff0 85px,#ffcb00 129px)"></i><i style="top:30px;left:0px;width:129px;height:3px;background:linear-gradient(90deg,#94ff06 0,#afff00 23px,#feff00 83px,#ffc900 129px)"></i><i style="top:33px;left:0px;width:129px;height:3px;background:linear-gradient(90deg,#95ff07 0,#b6ff00 27px,#ff0 82px,#ffc700 129px)"></i><i style="top:36px;left:0px;width:129px;height:3px;background:linear-gradient(90deg,#97ff08 0,#bdff00 31px,#ff0 80px,#ffc500 129px)"></i><i style="top:39px;left:0px;width:129px;height:3px;background:linear-gradient(90deg,#99ff09 0,#c3ff00 34px,#ff0 78px,#ffc400 129px)"></i><i style="top:42px;left:0px;width:129px;height:3px;background:linear-gradient(90deg,#9aff0b 0,#caff00 38px,#ff0 76px,#ffde00 102px,#ffc200 129px)"></i><i style="top:45px;left:0px;width:129px;height:3px;background:linear-gradient(90deg,#9cff0c 0,#d0ff00 41px,#fffe00 75px,#fd0 101px,#ffc000 129px)"></i><i style="top:48px;left:0px;width:129px;height:3px;background:linear-gradient(90deg,#9eff0d 0,#d8ff00 45px,#ff0 73px,#fd0 99px,#ffbe00 129px)"></i><i style="top:51px;left:0px;width:129px;height:3px;background:linear-gradient(90deg,#a0ff0e 0,#e0ff00 49px,#ff0 71px,#ffdc00 98px,#ffbc00 129px)"></i><i style="top:54px;left:0px;width:129px;height:3px;background:linear-gradient(90deg,#a2ff0f 0,#e6ff00 52px,#ff0 69px,#ffda00 98px,#ffba00 129px)"></i><i style="top:57px;left:0px;width:129px;height:3px;background:linear-gradient(90deg,#a3ff10 0,#feff00 67px,#ffd900 97px,#ffb800 129px)"></i><i style="top:60px;left:0px;width:129px;height:3px;background:linear-gradient(90deg,#a5ff11 0,#fffe00 66px,#ffd800 96px,#ffb600 129px)"></i><i style="top:63px;left:0px;width:129px;height:3px;background:linear-gradient(90deg,#a7ff12 0,#ff0 64px,#ffd800 94px,#ffb500 129px)"></i><i style="top:66px;left:0px;width:129px;height:3px;background:linear-gradient(90deg,#a9ff14 0,#ffff02 62px,#ffd700 93px,#ffb300 129px)"></i><i style="top:69px;left:0px;width:129px;height:3px;background:linear-gradient(90deg,#abff15 0,#ffff04 60px,#ffd500 93px,#ffb100 129px)"></i><i style="top:72px;left:0px;width:129px;height:3px;background:linear-gradient(90deg,#adff16 0,#fffe05 59px,#ffd300 92px,#ffaf00 129px)"></i><i style="top:75px;left:0px;width:129px;height:3px;background:linear-gradient(90deg,#afff17 0,#ffff07 57px,#ffd400 90px,#ffad00 129px)"></i><i style="top:78px;left:0px;width:129px;height:3px;background:linear-gradient(90deg,#b1ff19 0,#ffff09 55px,#ffd300 89px,#ffac00 129px)"></i><i style="top:81px;left:0px;width:129px;height:3px;background:linear-gradient(90deg,#b3ff1a 0,#ffff0b 53px,#ffd000 89px,#fa0 129px)"></i><i style="top:84px;left:0px;width:129px;height:3px;background:linear-gradient(90deg,#b5ff1b 0,#fffe0c 52px,#ffcf00 88px,#ffa800 129px)"></i><i style="top:87px;left:0px;width:129px;height:3px;background:linear-gradient(90deg,#b7ff1c 0,#fffe0e 50px,#ffcf02 86px,#ffa600 129px)"></i><i style="top:90px;left:0px;width:129px;height:3px;background:linear-gradient(90deg,#b9ff1e 0,#ffff10 48px,#ffce03 85px,#ffa500 129px)"></i><i style="top:93px;left:0px;width:129px;height:3px;background:linear-gradient(90deg,#bcff1f 0,#ffff12 46px,#ffcd05 84px,#ffa300 129px)"></i><i style="top:96px;left:0px;width:129px;height:3px;background:linear-gradient(90deg,#beff20 0,#ffff14 44px,#ffcc06 83px,#ffb700 104px,#ffa100 129px)"></i><i style="top:99px;left:0px;width:129px;height:3px;background:linear-gradient(90deg,#c0ff22 0,#fffe15 43px,#ffcb07 82px,#ffb100 108px,#ffa000 129px)"></i><i style="top:102px;left:0px;width:129px;height:3px;background:linear-gradient(90deg,#c2ff23 0,#ffff17 41px,#ffca09 81px,#ffac00 112px,#ff9e00 129px)"></i><i style="top:105px;left:0px;width:129px;height:3px;background:linear-gradient(90deg,#c4ff25 0,#ffff1a 39px,#ffc90a 80px,#ff9c00 129px)"></i><i style="top:108px;left:0px;width:129px;height:3px;background:linear-gradient(90deg,#c7ff26 0,#ffff1c 37px,#ffc80b 79px,#ff9a00 129px)"></i><i style="top:111px;left:0px;width:129px;height:3px;background:linear-gradient(90deg,#c9ff28 0,#fffe1d 36px,#ffc70d 78px,#f90 129px)"></i><i style="top:114px;left:0px;width:129px;height:3px;background:linear-gradient(90deg,#cbff29 0,#fffe1f 34px,#ffc60e 77px,#ff9700 129px)"></i><i style="top:117px;left:0px;width:129px;height:3px;background:linear-gradient(90deg,#ceff2a 0,#ffff21 32px,#ffc50f 76px,#ff9600 129px)"></i><i style="top:120px;left:0px;width:129px;height:3px;background:linear-gradient(90deg,#d0ff2c 0,#ffff24 30px,#ffc410 75px,#ff9401 129px)"></i><i style="top:123px;left:0px;width:129px;height:3px;background:linear-gradient(90deg,#d3ff2d 0,#fffe25 29px,#ffdf1b 50px,#ffc312 74px,#ff9202 129px)"></i><i style="top:126px;left:0px;width:129px;height:3px;background:linear-gradient(90deg,#d5ff2f 0,#fffe27 27px,#ffde1d 49px,#ffc113 73px,#ff9103 129px)"></i><i style="top:129px;left:0px;width:129px;height:2px;background:linear-gradient(90deg,#d7ff30 0,#ffff29 25px,#ffdf1e 47px,#ffc114 72px,#ff8f04 129px)"></i></div>
</div>
<svg width="1162" height="578" viewBox="0 0 1162 578"><defs><linearGradient id="gR" x1="0" y1="0" x2="0" y2="1"><stop offset="0" stop-color="#ff1010"/><stop offset="0.5" stop-color="#ff0000"/><stop offset="1" stop-color="#b00000"/></linearGradient><linearGradient id="gG" x1="0" y1="0" x2="0" y2="1"><stop offset="0" stop-color="#008a00"/><stop offset="0.5" stop-color="#008000"/><stop offset="1" stop-color="#005800"/></linearGradient><linearGradient id="gB" x1="0" y1="0" x2="0" y2="1"><stop offset="0" stop-color="#6666ff"/><stop offset="0.1" stop-color="#4646ff"/><stop offset="0.23" stop-color="#0000ff"/><stop offset="0.55" stop-color="#0000ee"/><stop offset="1" stop-color="#000068"/></linearGradient><linearGradient id="gY1" x1="0" y1="0" x2="0" y2="1"><stop offset="0" stop-color="#d8d458"/><stop offset="0.35" stop-color="#c8c420"/><stop offset="1" stop-color="#b0ac00"/></linearGradient><linearGradient id="gYC" x1="0" y1="0" x2="0" y2="1"><stop offset="0" stop-color="#d8d458"/><stop offset="0.12" stop-color="#d0cc38"/><stop offset="0.33" stop-color="#c4c000"/><stop offset="0.6" stop-color="#c0bc00"/><stop offset="1" stop-color="#8c8a08"/></linearGradient><linearGradient id="gYH" x1="0" y1="0" x2="0" y2="1"><stop offset="0" stop-color="#d8d458"/><stop offset="0.25" stop-color="#c8c400"/><stop offset="0.55" stop-color="#c0bc00"/><stop offset="1" stop-color="#605e00"/></linearGradient><linearGradient id="e10" x1="0" y1="0" x2="0" y2="1"><stop offset="0" stop-color="#d8b9b9"/><stop offset="0.16" stop-color="#c29b9b"/><stop offset="0.6" stop-color="#a68585"/><stop offset="1" stop-color="#514141"/></linearGradient><linearGradient id="e11" x1="0" y1="0" x2="0" y2="1"><stop offset="0" stop-color="#b9d7b9"/><stop offset="0.16" stop-color="#9bc09b"/><stop offset="0.6" stop-color="#85a585"/><stop offset="1" stop-color="#415041"/></linearGradient><linearGradient id="e12" x1="0" y1="0" x2="0" y2="1"><stop offset="0" stop-color="#b9b9d8"/><stop offset="0.16" stop-color="#9b9bc1"/><stop offset="0.6" stop-color="#8585a5"/><stop offset="1" stop-color="#414151"/></linearGradient><linearGradient id="e13" x1="0" y1="0" x2="0" y2="1"><stop offset="0" stop-color="#b9d7d7"/><stop offset="0.16" stop-color="#9bc0c0"/><stop offset="0.6" stop-color="#85a5a5"/><stop offset="1" stop-color="#415050"/></linearGradient><linearGradient id="e14" x1="0" y1="0" x2="0" y2="1"><stop offset="0" stop-color="#d7b9d7"/><stop offset="0.16" stop-color="#c09bc0"/><stop offset="0.6" stop-color="#a585a5"/><stop offset="1" stop-color="#504150"/></linearGradient><linearGradient id="e15" x1="0" y1="0" x2="0" y2="1"><stop offset="0" stop-color="#d7d7b9"/><stop offset="0.16" stop-color="#c0c09b"/><stop offset="0.6" stop-color="#a5a585"/><stop offset="1" stop-color="#505041"/></linearGradient><linearGradient id="e20" x1="0" y1="0" x2="0" y2="1"><stop offset="0" stop-color="#dc9e9e"/><stop offset="0.16" stop-color="#c67b7b"/><stop offset="0.6" stop-color="#aa6969"/><stop offset="1" stop-color="#533333"/></linearGradient><linearGradient id="e21" x1="0" y1="0" x2="0" y2="1"><stop offset="0" stop-color="#9ed89e"/><stop offset="0.16" stop-color="#7bc27b"/><stop offset="0.6" stop-color="#69a669"/><stop offset="1" stop-color="#335133"/></linearGradient><linearGradient id="e22" x1="0" y1="0" x2="0" y2="1"><stop offset="0" stop-color="#9e9eda"/><stop offset="0.16" stop-color="#7b7bc4"/><stop offset="0.6" stop-color="#6969a8"/><stop offset="1" stop-color="#333352"/></linearGradient><linearGradient id="e23" x1="0" y1="0" x2="0" y2="1"><stop offset="0" stop-color="#9ed8d8"/><stop offset="0.16" stop-color="#7bc2c2"/><stop offset="0.6" stop-color="#69a6a6"/><stop offset="1" stop-color="#335151"/></linearGradient><linearGradient id="e24" x1="0" y1="0" x2="0" y2="1"><stop offset="0" stop-color="#d89ed8"/><stop offset="0.16" stop-color="#c27bc2"/><stop offset="0.6" stop-color="#a669a6"/><stop offset="1" stop-color="#513351"/></linearGradient><linearGradient id="e25" x1="0" y1="0" x2="0" y2="1"><stop offset="0" stop-color="#d8d89e"/><stop offset="0.16" stop-color="#c2c27b"/><stop offset="0.6" stop-color="#a6a669"/><stop offset="1" stop-color="#515133"/></linearGradient><linearGradient id="e30" x1="0" y1="0" x2="0" y2="1"><stop offset="0" stop-color="#de8484"/><stop offset="0.16" stop-color="#c95b5b"/><stop offset="0.6" stop-color="#ac4e4e"/><stop offset="1" stop-color="#542626"/></linearGradient><linearGradient id="e31" x1="0" y1="0" x2="0" y2="1"><stop offset="0" stop-color="#84da84"/><stop offset="0.16" stop-color="#5bc45b"/><stop offset="0.6" stop-color="#4ea84e"/><stop offset="1" stop-color="#265226"/></linearGradient><linearGradient id="e32" x1="0" y1="0" x2="0" y2="1"><stop offset="0" stop-color="#8484dc"/><stop offset="0.16" stop-color="#5b5bc6"/><stop offset="0.6" stop-color="#4e4eaa"/><stop offset="1" stop-color="#262653"/></linearGradient><linearGradient id="e33" x1="0" y1="0" x2="0" y2="1"><stop offset="0" stop-color="#84dada"/><stop offset="0.16" stop-color="#5bc4c4"/><stop offset="0.6" stop-color="#4ea8a8"/><stop offset="1" stop-color="#265252"/></linearGradient><linearGradient id="e34" x1="0" y1="0" x2="0" y2="1"><stop offset="0" stop-color="#da84da"/><stop offset="0.16" stop-color="#c45bc4"/><stop offset="0.6" stop-color="#a84ea8"/><stop offset="1" stop-color="#522652"/></linearGradient><linearGradient id="e35" x1="0" y1="0" x2="0" y2="1"><stop offset="0" stop-color="#dada84"/><stop offset="0.16" stop-color="#c4c45b"/><stop offset="0.6" stop-color="#a8a84e"/><stop offset="1" stop-color="#525226"/></linearGradient><linearGradient id="e40" x1="0" y1="0" x2="0" y2="1"><stop offset="0" stop-color="#e26767"/><stop offset="0.16" stop-color="#cd3838"/><stop offset="0.6" stop-color="#b03030"/><stop offset="1" stop-color="#561717"/></linearGradient><linearGradient id="e41" x1="0" y1="0" x2="0" y2="1"><stop offset="0" stop-color="#67dc67"/><stop offset="0.16" stop-color="#38c638"/><stop offset="0.6" stop-color="#30aa30"/><stop offset="1" stop-color="#175317"/></linearGradient><linearGradient id="e42" x1="0" y1="0" x2="0" y2="1"><stop offset="0" stop-color="#6767de"/><stop offset="0.16" stop-color="#3838c9"/><stop offset="0.6" stop-color="#3030ac"/><stop offset="1" stop-color="#171754"/></linearGradient><linearGradient id="e43" x1="0" y1="0" x2="0" y2="1"><stop offset="0" stop-color="#67dcdc"/><stop offset="0.16" stop-color="#38c6c6"/><stop offset="0.6" stop-color="#30aaaa"/><stop offset="1" stop-color="#175353"/></linearGradient><linearGradient id="e44" x1="0" y1="0" x2="0" y2="1"><stop offset="0" stop-color="#dc67dc"/><stop offset="0.16" stop-color="#c638c6"/><stop offset="0.6" stop-color="#aa30aa"/><stop offset="1" stop-color="#531753"/></linearGradient><linearGradient id="e45" x1="0" y1="0" x2="0" y2="1"><stop offset="0" stop-color="#dcdc67"/><stop offset="0.16" stop-color="#c6c638"/><stop offset="0.6" stop-color="#aaaa30"/><stop offset="1" stop-color="#535317"/></linearGradient><linearGradient id="e50" x1="0" y1="0" x2="0" y2="1"><stop offset="0" stop-color="#e64545"/><stop offset="0.16" stop-color="#d20e0e"/><stop offset="0.6" stop-color="#b40c0c"/><stop offset="1" stop-color="#580505"/></linearGradient><linearGradient id="e51" x1="0" y1="0" x2="0" y2="1"><stop offset="0" stop-color="#45dd45"/><stop offset="0.16" stop-color="#0ec80e"/><stop offset="0.6" stop-color="#0cac0c"/><stop offset="1" stop-color="#055405"/></linearGradient><linearGradient id="e52" x1="0" y1="0" x2="0" y2="1"><stop offset="0" stop-color="#4545e2"/><stop offset="0.16" stop-color="#0e0ecd"/><stop offset="0.6" stop-color="#0c0cb0"/><stop offset="1" stop-color="#050556"/></linearGradient><linearGradient id="e53" x1="0" y1="0" x2="0" y2="1"><stop offset="0" stop-color="#45dddd"/><stop offset="0.16" stop-color="#0ec8c8"/><stop offset="0.6" stop-color="#0cacac"/><stop offset="1" stop-color="#055454"/></linearGradient><linearGradient id="e54" x1="0" y1="0" x2="0" y2="1"><stop offset="0" stop-color="#dd45dd"/><stop offset="0.16" stop-color="#c80ec8"/><stop offset="0.6" stop-color="#ac0cac"/><stop offset="1" stop-color="#540554"/></linearGradient><linearGradient id="e55" x1="0" y1="0" x2="0" y2="1"><stop offset="0" stop-color="#dddd45"/><stop offset="0.16" stop-color="#c8c80e"/><stop offset="0.6" stop-color="#acac0c"/><stop offset="1" stop-color="#545405"/></linearGradient><linearGradient id="eW" x1="0" y1="0" x2="0" y2="1"><stop offset="0" stop-color="#ffffff"/><stop offset="0.5" stop-color="#f0f0f0"/><stop offset="1" stop-color="#b0b0b0"/></linearGradient><linearGradient id="gHd" x1="0" y1="0" x2="0" y2="1"><stop offset="0" stop-color="#2f2f2f"/><stop offset="0.5" stop-color="#2a2a2a"/><stop offset="0.5" stop-color="#181818"/><stop offset="1" stop-color="#0e0e0e"/></linearGradient></defs>
<text x="13.2" y="39.8" font-size="28.6" textLength="228" lengthAdjust="spacingAndGlyphs" fill="#f4f4f4">Saturation Sweeps</text>
<rect x="29" y="88" width="178" height="316" fill="#252525"/>
<rect x="29" y="106" width="178" height="1" fill="#858585"/>
<rect x="25" y="106" width="4" height="1" fill="#e0e0e0"/>
<text x="25.2" y="110.7" font-size="11" textLength="11.01" lengthAdjust="spacingAndGlyphs" text-anchor="end">80</text>
<rect x="29" y="141" width="178" height="1" fill="#858585"/>
<rect x="25" y="141" width="4" height="1" fill="#e0e0e0"/>
<text x="25.2" y="145.7" font-size="11" textLength="11.01" lengthAdjust="spacingAndGlyphs" text-anchor="end">60</text>
<rect x="29" y="177" width="178" height="1" fill="#858585"/>
<rect x="25" y="177" width="4" height="1" fill="#e0e0e0"/>
<text x="25.2" y="181.7" font-size="11" textLength="11.01" lengthAdjust="spacingAndGlyphs" text-anchor="end">40</text>
<rect x="29" y="211" width="178" height="1" fill="#858585"/>
<rect x="25" y="211" width="4" height="1" fill="#e0e0e0"/>
<text x="25.2" y="215.7" font-size="11" textLength="11.01" lengthAdjust="spacingAndGlyphs" text-anchor="end">20</text>
<rect x="29" y="247" width="178" height="1" fill="#858585"/>
<rect x="25" y="247" width="4" height="1" fill="#e0e0e0"/>
<text x="25.2" y="251.7" font-size="11" textLength="5.51" lengthAdjust="spacingAndGlyphs" text-anchor="end">0</text>
<rect x="29" y="281" width="178" height="1" fill="#858585"/>
<rect x="25" y="281" width="4" height="1" fill="#e0e0e0"/>
<text x="25.2" y="285.7" font-size="11" textLength="14.31" lengthAdjust="spacingAndGlyphs" text-anchor="end">-20</text>
<rect x="29" y="316" width="178" height="1" fill="#858585"/>
<rect x="25" y="316" width="4" height="1" fill="#e0e0e0"/>
<text x="25.2" y="320.7" font-size="11" textLength="14.31" lengthAdjust="spacingAndGlyphs" text-anchor="end">-40</text>
<rect x="29" y="352" width="178" height="1" fill="#858585"/>
<rect x="25" y="352" width="4" height="1" fill="#e0e0e0"/>
<text x="25.2" y="356.7" font-size="11" textLength="14.31" lengthAdjust="spacingAndGlyphs" text-anchor="end">-60</text>
<rect x="29" y="386" width="178" height="1" fill="#858585"/>
<rect x="25" y="386" width="4" height="1" fill="#e0e0e0"/>
<text x="25.2" y="390.7" font-size="11" textLength="14.31" lengthAdjust="spacingAndGlyphs" text-anchor="end">-80</text>
<rect x="47" y="235" width="48" height="12" fill="#000"/>
<rect x="48" y="236" width="46" height="10" fill="url(#gR)"/>
<rect x="95" y="247" width="47.5" height="11.6" fill="#000"/>
<rect x="96" y="248" width="45.5" height="9.6" fill="url(#gG)"/>
<rect x="142" y="94" width="48" height="153" fill="#000"/>
<rect x="143" y="95" width="46" height="151" fill="url(#gB)"/>
<rect x="29" y="88" width="178" height="1" fill="#a4a4a4"/>
<rect x="29" y="403" width="178" height="1" fill="#a4a4a4"/>
<rect x="29" y="88" width="1" height="316" fill="#a4a4a4"/>
<rect x="206" y="88" width="1" height="316" fill="#a4a4a4"/>
<rect x="29" y="403" width="1" height="5" fill="#e0e0e0"/>
<rect x="206" y="403" width="1" height="5" fill="#e0e0e0"/>
<text x="108.7" y="84.8" font-size="11" textLength="58.3" lengthAdjust="spacingAndGlyphs" text-anchor="middle">RGB Balance</text>
<text x="118.2" y="415" font-size="11" textLength="25.32" lengthAdjust="spacingAndGlyphs" text-anchor="middle">100%</text>
<rect x="276" y="30" width="97" height="192" fill="#252525"/>
<rect x="272" y="30" width="4" height="1" fill="#e0e0e0"/>
<text x="272.4" y="35.7" font-size="11" textLength="11.01" lengthAdjust="spacingAndGlyphs" text-anchor="end">15</text>
<rect x="276" y="63" width="97" height="1" fill="#858585"/>
<rect x="272" y="63" width="4" height="1" fill="#e0e0e0"/>
<text x="272.4" y="67.37" font-size="11" textLength="11.01" lengthAdjust="spacingAndGlyphs" text-anchor="end">10</text>
<rect x="276" y="95" width="97" height="1" fill="#858585"/>
<rect x="272" y="95" width="4" height="1" fill="#e0e0e0"/>
<text x="272.4" y="99.04" font-size="11" textLength="5.51" lengthAdjust="spacingAndGlyphs" text-anchor="end">5</text>
<rect x="276" y="127" width="97" height="1" fill="#858585"/>
<rect x="272" y="127" width="4" height="1" fill="#e0e0e0"/>
<text x="272.4" y="130.7" font-size="11" textLength="5.51" lengthAdjust="spacingAndGlyphs" text-anchor="end">0</text>
<rect x="276" y="158" width="97" height="1" fill="#858585"/>
<rect x="272" y="158" width="4" height="1" fill="#e0e0e0"/>
<text x="272.4" y="162.36" font-size="11" textLength="8.8" lengthAdjust="spacingAndGlyphs" text-anchor="end">-5</text>
<rect x="276" y="190" width="97" height="1" fill="#858585"/>
<rect x="272" y="190" width="4" height="1" fill="#e0e0e0"/>
<text x="272.4" y="194.03" font-size="11" textLength="14.31" lengthAdjust="spacingAndGlyphs" text-anchor="end">-10</text>
<text x="272.4" y="225.69" font-size="11" textLength="14.31" lengthAdjust="spacingAndGlyphs" text-anchor="end">-15</text>
<rect x="286.3" y="126.3" width="76.6" height="6" fill="#000"/>
<rect x="287.3" y="127.3" width="74.6" height="4" fill="url(#gY1)"/>
<rect x="276" y="60.9" width="97" height="1.1" fill="#c01010"/>
<rect x="276" y="62" width="97" height="0.8" fill="#8c1616"/>
<rect x="276" y="188.1" width="97" height="1.1" fill="#c01010"/>
<rect x="276" y="189.2" width="97" height="0.7" fill="#8c1616"/>
<rect x="276" y="105.8" width="97" height="1.35" fill="#f4f400"/>
<rect x="276" y="143.8" width="97" height="1.35" fill="#f4f400"/>
<rect x="276" y="118.5" width="97" height="1.4" fill="#0e5a0e"/>
<rect x="276" y="131" width="97" height="1.4" fill="#127012"/>
<rect x="276" y="30" width="97" height="1" fill="#a4a4a4"/>
<rect x="276" y="220" width="97" height="2" fill="#939393"/>
<rect x="276" y="30" width="1" height="191" fill="#a4a4a4"/>
<rect x="372" y="30" width="1" height="191" fill="#a4a4a4"/>
<rect x="276" y="220" width="1" height="6" fill="#e0e0e0"/>
<rect x="372" y="220" width="1" height="6" fill="#e0e0e0"/>
<text x="315.4" y="26.7" font-size="11" textLength="30.21" lengthAdjust="spacingAndGlyphs" text-anchor="middle">DeltaL</text>
<text x="324.5" y="231.8" font-size="11" textLength="25.32" lengthAdjust="spacingAndGlyphs" text-anchor="middle">100%</text>
<rect x="409" y="30" width="97" height="192" fill="#252525"/>
<rect x="405" y="30" width="4" height="1" fill="#e0e0e0"/>
<text x="405.4" y="35.7" font-size="11" textLength="11.01" lengthAdjust="spacingAndGlyphs" text-anchor="end">15</text>
<rect x="409" y="63" width="97" height="1" fill="#858585"/>
<rect x="405" y="63" width="4" height="1" fill="#e0e0e0"/>
<text x="405.4" y="67.37" font-size="11" textLength="11.01" lengthAdjust="spacingAndGlyphs" text-anchor="end">10</text>
<rect x="409" y="95" width="97" height="1" fill="#858585"/>
<rect x="405" y="95" width="4" height="1" fill="#e0e0e0"/>
<text x="405.4" y="99.04" font-size="11" textLength="5.51" lengthAdjust="spacingAndGlyphs" text-anchor="end">5</text>
<rect x="409" y="127" width="97" height="1" fill="#858585"/>
<rect x="405" y="127" width="4" height="1" fill="#e0e0e0"/>
<text x="405.4" y="130.7" font-size="11" textLength="5.51" lengthAdjust="spacingAndGlyphs" text-anchor="end">0</text>
<rect x="409" y="158" width="97" height="1" fill="#858585"/>
<rect x="405" y="158" width="4" height="1" fill="#e0e0e0"/>
<text x="405.4" y="162.36" font-size="11" textLength="8.8" lengthAdjust="spacingAndGlyphs" text-anchor="end">-5</text>
<rect x="409" y="190" width="97" height="1" fill="#858585"/>
<rect x="405" y="190" width="4" height="1" fill="#e0e0e0"/>
<text x="405.4" y="194.03" font-size="11" textLength="14.31" lengthAdjust="spacingAndGlyphs" text-anchor="end">-10</text>
<text x="405.4" y="225.69" font-size="11" textLength="14.31" lengthAdjust="spacingAndGlyphs" text-anchor="end">-15</text>
<rect x="419.3" y="126.3" width="76.6" height="94.7" fill="#000"/>
<rect x="420.3" y="127.3" width="74.6" height="93.7" fill="url(#gYC)"/>
<rect x="409" y="60.9" width="97" height="1.1" fill="#c01010"/>
<rect x="409" y="62" width="97" height="0.8" fill="#8c1616"/>
<rect x="409" y="188.1" width="97" height="1.1" fill="#c01010"/>
<rect x="409" y="189.2" width="97" height="0.7" fill="#8c1616"/>
<rect x="409" y="105.8" width="97" height="1.35" fill="#f4f400"/>
<rect x="409" y="143.8" width="97" height="1.35" fill="#f4f400"/>
<rect x="409" y="118.5" width="97" height="1.4" fill="#0e5a0e"/>
<rect x="409" y="131" width="97" height="1.4" fill="#127012"/>
<rect x="409" y="30" width="97" height="1" fill="#a4a4a4"/>
<rect x="409" y="220" width="97" height="2" fill="#939393"/>
<rect x="409" y="30" width="1" height="191" fill="#a4a4a4"/>
<rect x="505" y="30" width="1" height="191" fill="#a4a4a4"/>
<rect x="409" y="220" width="1" height="6" fill="#e0e0e0"/>
<rect x="505" y="220" width="1" height="6" fill="#e0e0e0"/>
<text x="448.4" y="26.7" font-size="11" textLength="31.94" lengthAdjust="spacingAndGlyphs" text-anchor="middle">DeltaC</text>
<text x="457.5" y="231.8" font-size="11" textLength="25.32" lengthAdjust="spacingAndGlyphs" text-anchor="middle">100%</text>
<rect x="542" y="30" width="97" height="192" fill="#252525"/>
<rect x="538" y="30" width="4" height="1" fill="#e0e0e0"/>
<text x="538.4" y="35.7" font-size="11" textLength="11.01" lengthAdjust="spacingAndGlyphs" text-anchor="end">15</text>
<rect x="542" y="63" width="97" height="1" fill="#858585"/>
<rect x="538" y="63" width="4" height="1" fill="#e0e0e0"/>
<text x="538.4" y="67.37" font-size="11" textLength="11.01" lengthAdjust="spacingAndGlyphs" text-anchor="end">10</text>
<rect x="542" y="95" width="97" height="1" fill="#858585"/>
<rect x="538" y="95" width="4" height="1" fill="#e0e0e0"/>
<text x="538.4" y="99.04" font-size="11" textLength="5.51" lengthAdjust="spacingAndGlyphs" text-anchor="end">5</text>
<rect x="542" y="127" width="97" height="1" fill="#858585"/>
<rect x="538" y="127" width="4" height="1" fill="#e0e0e0"/>
<text x="538.4" y="130.7" font-size="11" textLength="5.51" lengthAdjust="spacingAndGlyphs" text-anchor="end">0</text>
<rect x="542" y="158" width="97" height="1" fill="#858585"/>
<rect x="538" y="158" width="4" height="1" fill="#e0e0e0"/>
<text x="538.4" y="162.36" font-size="11" textLength="8.8" lengthAdjust="spacingAndGlyphs" text-anchor="end">-5</text>
<rect x="542" y="190" width="97" height="1" fill="#858585"/>
<rect x="538" y="190" width="4" height="1" fill="#e0e0e0"/>
<text x="538.4" y="194.03" font-size="11" textLength="14.31" lengthAdjust="spacingAndGlyphs" text-anchor="end">-10</text>
<text x="538.4" y="225.69" font-size="11" textLength="14.31" lengthAdjust="spacingAndGlyphs" text-anchor="end">-15</text>
<rect x="552.3" y="126.3" width="76.6" height="26.9" fill="#000"/>
<rect x="553.3" y="127.3" width="74.6" height="24.9" fill="url(#gYH)"/>
<rect x="542" y="60.9" width="97" height="1.1" fill="#c01010"/>
<rect x="542" y="62" width="97" height="0.8" fill="#8c1616"/>
<rect x="542" y="188.1" width="97" height="1.1" fill="#c01010"/>
<rect x="542" y="189.2" width="97" height="0.7" fill="#8c1616"/>
<rect x="542" y="105.8" width="97" height="1.35" fill="#f4f400"/>
<rect x="542" y="143.8" width="97" height="1.35" fill="#f4f400"/>
<rect x="542" y="118.5" width="97" height="1.4" fill="#0e5a0e"/>
<rect x="542" y="131" width="97" height="1.4" fill="#127012"/>
<rect x="542" y="30" width="97" height="1" fill="#a4a4a4"/>
<rect x="542" y="220" width="97" height="2" fill="#939393"/>
<rect x="542" y="30" width="1" height="191" fill="#a4a4a4"/>
<rect x="638" y="30" width="1" height="191" fill="#a4a4a4"/>
<rect x="542" y="220" width="1" height="6" fill="#e0e0e0"/>
<rect x="638" y="220" width="1" height="6" fill="#e0e0e0"/>
<text x="581.4" y="26.7" font-size="11" textLength="31.94" lengthAdjust="spacingAndGlyphs" text-anchor="middle">DeltaH</text>
<text x="590.5" y="231.8" font-size="11" textLength="25.32" lengthAdjust="spacingAndGlyphs" text-anchor="middle">100%</text>
<rect x="230" y="244" width="432" height="116" fill="#000"/>
<rect x="244" y="249" width="73" height="42" fill="#fff"/>
<rect x="245" y="250" width="71" height="40" fill="#c0bea8"/>
<rect x="244" y="302" width="73" height="41" fill="#fff"/>
<rect x="245" y="303" width="71" height="39" fill="#bebea6"/>
<text x="280.6" y="354" font-size="9.5" textLength="16.73" lengthAdjust="spacingAndGlyphs" text-anchor="middle" font-weight="bold" fill="#fff">20%</text>
<rect x="329" y="249" width="73" height="42" fill="#fff"/>
<rect x="330" y="250" width="71" height="40" fill="#c4bc8e"/>
<rect x="329" y="302" width="73" height="41" fill="#fff"/>
<rect x="330" y="303" width="71" height="39" fill="#c0be88"/>
<text x="365.3" y="354" font-size="9.5" textLength="16.73" lengthAdjust="spacingAndGlyphs" text-anchor="middle" font-weight="bold" fill="#fff">40%</text>
<rect x="414" y="249" width="72" height="42" fill="#fff"/>
<rect x="415" y="250" width="70" height="40" fill="#c4ba78"/>
<rect x="414" y="302" width="72" height="41" fill="#fff"/>
<rect x="415" y="303" width="70" height="39" fill="#c0be6c"/>
<text x="450" y="354" font-size="9.5" textLength="16.73" lengthAdjust="spacingAndGlyphs" text-anchor="middle" font-weight="bold" fill="#fff">60%</text>
<rect x="498" y="249" width="73" height="42" fill="#fff"/>
<rect x="499" y="250" width="71" height="40" fill="#c4b862"/>
<rect x="498" y="302" width="73" height="41" fill="#fff"/>
<rect x="499" y="303" width="71" height="39" fill="#bebe50"/>
<text x="534.7" y="354" font-size="9.5" textLength="16.73" lengthAdjust="spacingAndGlyphs" text-anchor="middle" font-weight="bold" fill="#fff">80%</text>
<rect x="583" y="249" width="72" height="42" fill="#fff"/>
<rect x="584" y="250" width="70" height="40" fill="#c4b448"/>
<rect x="583" y="302" width="72" height="41" fill="#fff"/>
<rect x="584" y="303" width="70" height="39" fill="#c0c000"/>
<text x="619.4" y="354" font-size="9.5" textLength="21.38" lengthAdjust="spacingAndGlyphs" text-anchor="middle" font-weight="bold" fill="#fff">100%</text>
<text transform="translate(239.2 270) rotate(-90)" font-size="9.5" font-weight="bold" fill="#fff" text-anchor="middle" textLength="24" lengthAdjust="spacingAndGlyphs">Actual</text>
<text transform="translate(239.2 323) rotate(-90)" font-size="9.5" font-weight="bold" fill="#fff" text-anchor="middle" textLength="25" lengthAdjust="spacingAndGlyphs">Target</text>
<rect x="239" y="381" width="424" height="177" fill="#252525"/>
<rect x="236" y="381" width="3" height="1" fill="#e0e0e0"/>
<text x="235.6" y="385.9" font-size="11" textLength="11.01" lengthAdjust="spacingAndGlyphs" text-anchor="end">20</text>
<rect x="239" y="426" width="424" height="1" fill="#858585"/>
<rect x="236" y="426" width="3" height="1" fill="#e0e0e0"/>
<text x="235.6" y="430.9" font-size="11" textLength="11.01" lengthAdjust="spacingAndGlyphs" text-anchor="end">15</text>
<rect x="239" y="470" width="424" height="1" fill="#858585"/>
<rect x="236" y="470" width="3" height="1" fill="#e0e0e0"/>
<text x="235.6" y="474.9" font-size="11" textLength="11.01" lengthAdjust="spacingAndGlyphs" text-anchor="end">10</text>
<rect x="239" y="514" width="424" height="1" fill="#858585"/>
<rect x="236" y="514" width="3" height="1" fill="#e0e0e0"/>
<text x="235.6" y="518.9" font-size="11" textLength="5.51" lengthAdjust="spacingAndGlyphs" text-anchor="end">5</text>
<rect x="236" y="557" width="3" height="1" fill="#e0e0e0"/>
<text x="235.6" y="561.9" font-size="11" textLength="5.51" lengthAdjust="spacingAndGlyphs" text-anchor="end">0</text>
<rect x="317.7" y="538.08" width="6.8" height="19.52" fill="#000"/>
<rect x="318.5" y="539.08" width="5.2" height="18.52" fill="url(#e10)"/>
<rect x="325.8" y="534.12" width="6.5" height="23.48" fill="#000"/>
<rect x="326.6" y="535.12" width="4.9" height="22.48" fill="url(#e11)"/>
<rect x="333.6" y="516.96" width="6" height="40.64" fill="#000"/>
<rect x="334.4" y="517.96" width="4.4" height="39.64" fill="url(#e12)"/>
<rect x="340.9" y="550.14" width="6.5" height="7.46" fill="#000"/>
<rect x="341.7" y="551.14" width="4.9" height="6.46" fill="url(#e13)"/>
<rect x="348.7" y="525.32" width="6.1" height="32.28" fill="#000"/>
<rect x="349.5" y="526.32" width="4.5" height="31.28" fill="url(#e14)"/>
<rect x="355.9" y="538.08" width="6.7" height="19.52" fill="#000"/>
<rect x="356.7" y="539.08" width="5.1" height="18.52" fill="url(#e15)"/>
<rect x="388.4" y="529.54" width="6.2" height="28.06" fill="#000"/>
<rect x="389.2" y="530.54" width="4.6" height="27.06" fill="url(#e20)"/>
<rect x="395.6" y="531.04" width="6.8" height="26.56" fill="#000"/>
<rect x="396.4" y="532.04" width="5.2" height="25.56" fill="url(#e21)"/>
<rect x="403.6" y="501.56" width="6.6" height="56.04" fill="#000"/>
<rect x="404.4" y="502.56" width="5" height="55.04" fill="url(#e22)"/>
<rect x="411" y="548.64" width="6.3" height="8.96" fill="#000"/>
<rect x="411.8" y="549.64" width="4.7" height="7.96" fill="url(#e23)"/>
<rect x="418.6" y="518.28" width="6.8" height="39.32" fill="#000"/>
<rect x="419.4" y="519.28" width="5.2" height="38.32" fill="url(#e24)"/>
<rect x="426.4" y="530.16" width="6.3" height="27.44" fill="#000"/>
<rect x="427.2" y="531.16" width="4.7" height="26.44" fill="url(#e25)"/>
<rect x="458.5" y="521.36" width="6.7" height="36.24" fill="#000"/>
<rect x="459.3" y="522.36" width="5.1" height="35.24" fill="url(#e30)"/>
<rect x="466.3" y="529.54" width="6.2" height="28.06" fill="#000"/>
<rect x="467.1" y="530.54" width="4.6" height="27.06" fill="url(#e31)"/>
<rect x="473.4" y="482.2" width="7" height="75.4" fill="#000"/>
<rect x="474.2" y="483.2" width="5.4" height="74.4" fill="url(#e32)"/>
<rect x="481.4" y="549.08" width="6.2" height="8.52" fill="#000"/>
<rect x="482.2" y="550.08" width="4.6" height="7.52" fill="url(#e33)"/>
<rect x="488.5" y="507.28" width="6.9" height="50.32" fill="#000"/>
<rect x="489.3" y="508.28" width="5.3" height="49.32" fill="url(#e34)"/>
<rect x="496.3" y="527.08" width="7.1" height="30.52" fill="#000"/>
<rect x="497.1" y="528.08" width="5.5" height="29.52" fill="url(#e35)"/>
<rect x="528.5" y="507.98" width="6.7" height="49.62" fill="#000"/>
<rect x="529.3" y="508.98" width="5.1" height="48.62" fill="url(#e40)"/>
<rect x="536.5" y="529.28" width="6.5" height="28.32" fill="#000"/>
<rect x="537.3" y="530.28" width="4.9" height="27.32" fill="url(#e41)"/>
<rect x="543.8" y="463.1" width="6.5" height="94.5" fill="#000"/>
<rect x="544.6" y="464.1" width="4.9" height="93.5" fill="url(#e42)"/>
<rect x="551.6" y="548.82" width="6.4" height="8.78" fill="#000"/>
<rect x="552.4" y="549.82" width="4.8" height="7.78" fill="url(#e43)"/>
<rect x="559.2" y="496.28" width="6.4" height="61.32" fill="#000"/>
<rect x="560" y="497.28" width="4.8" height="60.32" fill="url(#e44)"/>
<rect x="566.6" y="522.33" width="6.8" height="35.27" fill="#000"/>
<rect x="567.4" y="523.33" width="5.2" height="34.27" fill="url(#e45)"/>
<rect x="599.3" y="463.1" width="6.5" height="94.5" fill="#000"/>
<rect x="600.1" y="464.1" width="4.9" height="93.5" fill="url(#e50)"/>
<rect x="606.9" y="526.46" width="6.5" height="31.14" fill="#000"/>
<rect x="607.7" y="527.46" width="4.9" height="30.14" fill="url(#e51)"/>
<rect x="614.4" y="425" width="6.5" height="132.6" fill="#000"/>
<rect x="615.2" y="426" width="4.9" height="131.6" fill="url(#e52)"/>
<rect x="621.7" y="542.3" width="6.7" height="15.3" fill="#000"/>
<rect x="622.5" y="543.3" width="5.1" height="14.3" fill="url(#e53)"/>
<rect x="629.5" y="480.44" width="7" height="77.16" fill="#000"/>
<rect x="630.3" y="481.44" width="5.4" height="76.16" fill="url(#e54)"/>
<rect x="637.2" y="511.42" width="6.5" height="46.18" fill="#000"/>
<rect x="638" y="512.42" width="4.9" height="45.18" fill="url(#e55)"/>
<rect x="292.5" y="550" width="6.4" height="7.6" fill="#000"/>
<rect x="293.6" y="551" width="4.2" height="6.6" fill="url(#eW)"/>
<rect x="239" y="468.7" width="424" height="1.5" fill="#e01414"/>
<rect x="239" y="530.6" width="424" height="1.6" fill="#f4f400"/>
<rect x="239" y="548.6" width="424" height="1.5" fill="#0c560c"/>
<rect x="239" y="381" width="424" height="1" fill="#a4a4a4"/>
<rect x="239" y="557" width="424" height="1" fill="#a4a4a4"/>
<rect x="239" y="381" width="1" height="177" fill="#a4a4a4"/>
<rect x="662" y="381" width="1" height="177" fill="#a4a4a4"/>
<rect x="239" y="557" width="1" height="5" fill="#e0e0e0"/>
<rect x="310" y="557" width="1" height="5" fill="#e0e0e0"/>
<rect x="380" y="557" width="1" height="5" fill="#e0e0e0"/>
<rect x="450" y="557" width="1" height="5" fill="#e0e0e0"/>
<rect x="522" y="557" width="1" height="5" fill="#e0e0e0"/>
<rect x="592" y="557" width="1" height="5" fill="#e0e0e0"/>
<rect x="662" y="557" width="1" height="5" fill="#e0e0e0"/>
<text x="274.8" y="569" font-size="11" textLength="16.52" lengthAdjust="spacingAndGlyphs" text-anchor="middle">100</text>
<text x="345.1" y="569" font-size="11" textLength="19.81" lengthAdjust="spacingAndGlyphs" text-anchor="middle">20%</text>
<text x="415.4" y="569" font-size="11" textLength="19.81" lengthAdjust="spacingAndGlyphs" text-anchor="middle">40%</text>
<text x="486" y="569" font-size="11" textLength="19.81" lengthAdjust="spacingAndGlyphs" text-anchor="middle">60%</text>
<text x="556.9" y="569" font-size="11" textLength="19.81" lengthAdjust="spacingAndGlyphs" text-anchor="middle">80%</text>
<text x="627.4" y="569" font-size="11" textLength="25.32" lengthAdjust="spacingAndGlyphs" text-anchor="middle">100%</text>
<text x="444" y="377.7" font-size="11" textLength="56.31" lengthAdjust="spacingAndGlyphs" text-anchor="middle">DeltaE 2000</text>
<text x="6.4" y="444.6" font-size="20" textLength="153.5" lengthAdjust="spacingAndGlyphs" fill="#f4f4f4">Current Reading</text>
<text x="6.6" y="474.9" font-size="18.5" textLength="72.3" lengthAdjust="spacingAndGlyphs" fill="#f4f4f4">x: 0,4109</text>
<text x="6.6" y="503.2" font-size="18.5" textLength="62.8" lengthAdjust="spacingAndGlyphs" fill="#f4f4f4">y: 0,466</text>
<text x="6.6" y="531.7" font-size="18.5" textLength="77.8" lengthAdjust="spacingAndGlyphs" fill="#f4f4f4">fL: 27,939</text>
<text x="6.6" y="560.7" font-size="18.5" textLength="111.6" lengthAdjust="spacingAndGlyphs" fill="#f4f4f4">cd/m²: 95,725</text>
<rect x="701" y="29" width="323" height="1" fill="#a4a4a4"/>
<rect x="701" y="29" width="1" height="359" fill="#a4a4a4"/>
<rect x="701" y="387" width="453" height="1" fill="#a4a4a4"/>
<rect x="1153" y="29" width="1" height="359" fill="#a4a4a4"/>
<rect x="1025.5" y="30.5" width="128" height="130" fill="none" stroke="#9a9a9a" stroke-width="1"/>
<rect x="701" y="388" width="1" height="4" fill="#e0e0e0"/>
<rect x="697" y="387" width="4" height="1" fill="#e0e0e0"/>
<text x="701.8" y="403" font-size="11" textLength="5.69" lengthAdjust="spacingAndGlyphs" text-anchor="middle">0</text>
<text x="697.2" y="392.2" font-size="11" textLength="5.69" lengthAdjust="spacingAndGlyphs" text-anchor="end">0</text>
<rect x="754" y="388" width="1" height="4" fill="#e0e0e0"/>
<rect x="697" y="345" width="4" height="1" fill="#e0e0e0"/>
<text x="755.63" y="403" font-size="11" textLength="14.22" lengthAdjust="spacingAndGlyphs" text-anchor="middle">0,1</text>
<text x="697.2" y="349.62" font-size="11" textLength="14.22" lengthAdjust="spacingAndGlyphs" text-anchor="end">0,1</text>
<rect x="809" y="388" width="1" height="4" fill="#e0e0e0"/>
<rect x="697" y="302" width="4" height="1" fill="#e0e0e0"/>
<text x="809.46" y="403" font-size="11" textLength="14.22" lengthAdjust="spacingAndGlyphs" text-anchor="middle">0,2</text>
<text x="697.2" y="307.04" font-size="11" textLength="14.22" lengthAdjust="spacingAndGlyphs" text-anchor="end">0,2</text>
<rect x="862" y="388" width="1" height="4" fill="#e0e0e0"/>
<rect x="697" y="259" width="4" height="1" fill="#e0e0e0"/>
<text x="863.29" y="403" font-size="11" textLength="14.22" lengthAdjust="spacingAndGlyphs" text-anchor="middle">0,3</text>
<text x="697.2" y="264.46" font-size="11" textLength="14.22" lengthAdjust="spacingAndGlyphs" text-anchor="end">0,3</text>
<rect x="916" y="388" width="1" height="4" fill="#e0e0e0"/>
<rect x="697" y="217" width="4" height="1" fill="#e0e0e0"/>
<text x="917.12" y="403" font-size="11" textLength="14.22" lengthAdjust="spacingAndGlyphs" text-anchor="middle">0,4</text>
<text x="697.2" y="221.88" font-size="11" textLength="14.22" lengthAdjust="spacingAndGlyphs" text-anchor="end">0,4</text>
<rect x="970" y="388" width="1" height="4" fill="#e0e0e0"/>
<rect x="697" y="174" width="4" height="1" fill="#e0e0e0"/>
<text x="970.95" y="403" font-size="11" textLength="14.22" lengthAdjust="spacingAndGlyphs" text-anchor="middle">0,5</text>
<text x="697.2" y="179.3" font-size="11" textLength="14.22" lengthAdjust="spacingAndGlyphs" text-anchor="end">0,5</text>
<rect x="1023" y="388" width="1" height="4" fill="#e0e0e0"/>
<rect x="697" y="132" width="4" height="1" fill="#e0e0e0"/>
<text x="1024.78" y="403" font-size="11" textLength="14.22" lengthAdjust="spacingAndGlyphs" text-anchor="middle">0,6</text>
<text x="697.2" y="136.72" font-size="11" textLength="14.22" lengthAdjust="spacingAndGlyphs" text-anchor="end">0,6</text>
<rect x="697" y="89" width="4" height="1" fill="#e0e0e0"/>
<text x="1078.61" y="403" font-size="11" textLength="14.22" lengthAdjust="spacingAndGlyphs" text-anchor="middle">0,7</text>
<text x="697.2" y="94.14" font-size="11" textLength="14.22" lengthAdjust="spacingAndGlyphs" text-anchor="end">0,7</text>
<rect x="1132" y="388" width="1" height="4" fill="#e0e0e0"/>
<rect x="697" y="46" width="4" height="1" fill="#e0e0e0"/>
<text x="1132.44" y="403" font-size="11" textLength="14.22" lengthAdjust="spacingAndGlyphs" text-anchor="middle">0,8</text>
<text x="697.2" y="51.56" font-size="11" textLength="14.22" lengthAdjust="spacingAndGlyphs" text-anchor="end">0,8</text>
<text x="891.8" y="26" font-size="11" textLength="53.8" lengthAdjust="spacingAndGlyphs">CIE 1931 xy</text>
<rect x="899.5" y="241.5" width="10" height="10" fill="none" stroke="#fff" stroke-width="1"/>
<rect x="934.5" y="241.5" width="10" height="10" fill="none" stroke="#fff" stroke-width="1"/>
<rect x="967.5" y="241.5" width="10" height="10" fill="none" stroke="#fff" stroke-width="1"/>
<rect x="1002.5" y="241.5" width="10" height="10" fill="none" stroke="#fff" stroke-width="1"/>
<rect x="1040.5" y="241.5" width="10" height="10" fill="none" stroke="#fff" stroke-width="1"/>
<rect x="862.5" y="218.5" width="10" height="10" fill="none" stroke="#fff" stroke-width="1"/>
<rect x="861.5" y="195.5" width="10" height="10" fill="none" stroke="#fff" stroke-width="1"/>
<rect x="860.5" y="174.5" width="10" height="10" fill="none" stroke="#fff" stroke-width="1"/>
<rect x="858.5" y="151.5" width="10" height="10" fill="none" stroke="#fff" stroke-width="1"/>
<rect x="857.5" y="126.5" width="10" height="10" fill="none" stroke="#fff" stroke-width="1"/>
<rect x="846.5" y="264.5" width="10" height="10" fill="none" stroke="#fff" stroke-width="1"/>
<rect x="829.5" y="287.5" width="10" height="10" fill="none" stroke="#fff" stroke-width="1"/>
<rect x="812.5" y="309.5" width="10" height="10" fill="none" stroke="#fff" stroke-width="1"/>
<rect x="795.5" y="331.5" width="10" height="10" fill="none" stroke="#fff" stroke-width="1"/>
<rect x="776.5" y="356.5" width="10" height="10" fill="none" stroke="#fff" stroke-width="1"/>
<rect x="854.5" y="242.5" width="10" height="10" fill="none" stroke="#fff" stroke-width="1"/>
<rect x="845.5" y="242.5" width="10" height="10" fill="none" stroke="#fff" stroke-width="1"/>
<rect x="836.5" y="242.5" width="10" height="10" fill="none" stroke="#fff" stroke-width="1"/>
<rect x="827.5" y="242.5" width="10" height="10" fill="none" stroke="#fff" stroke-width="1"/>
<rect x="816.5" y="242.5" width="10" height="10" fill="none" stroke="#fff" stroke-width="1"/>
<rect x="865.5" y="256.5" width="10" height="10" fill="none" stroke="#fff" stroke-width="1"/>
<rect x="866.5" y="271.5" width="10" height="10" fill="none" stroke="#fff" stroke-width="1"/>
<rect x="866.5" y="285.5" width="10" height="10" fill="none" stroke="#fff" stroke-width="1"/>
<rect x="867.5" y="300.5" width="10" height="10" fill="none" stroke="#fff" stroke-width="1"/>
<rect x="868.5" y="316.5" width="10" height="10" fill="none" stroke="#fff" stroke-width="1"/>
<rect x="875.5" y="226.5" width="10" height="10" fill="none" stroke="#fff" stroke-width="1"/>
<rect x="887.5" y="211.5" width="10" height="10" fill="none" stroke="#fff" stroke-width="1"/>
<rect x="898.5" y="197.5" width="10" height="10" fill="none" stroke="#fff" stroke-width="1"/>
<rect x="909.5" y="183.5" width="10" height="10" fill="none" stroke="#fff" stroke-width="1"/>
<rect x="921.5" y="166.5" width="10" height="10" fill="none" stroke="#fff" stroke-width="1"/>
<ellipse cx="868" cy="145.3" rx="2.8" ry="3" fill="#26c216" stroke="#101010" stroke-width="1"/>
<ellipse cx="870" cy="166.3" rx="2.8" ry="3" fill="#41c232" stroke="#101010" stroke-width="1"/>
<ellipse cx="870" cy="187.3" rx="2.8" ry="3" fill="#59c24e" stroke="#101010" stroke-width="1"/>
<ellipse cx="870" cy="207.3" rx="2.8" ry="3" fill="#74c26c" stroke="#101010" stroke-width="1"/>
<ellipse cx="870" cy="228" rx="2.8" ry="3" fill="#97c292" stroke="#101010" stroke-width="1"/>
<ellipse cx="922.4" cy="188.6" rx="2.8" ry="3" fill="#c2b22b" stroke="#101010" stroke-width="1"/>
<ellipse cx="912.3" cy="199.5" rx="2.8" ry="3" fill="#c2b545" stroke="#101010" stroke-width="1"/>
<ellipse cx="902.5" cy="209.4" rx="2.8" ry="3" fill="#c2b95e" stroke="#101010" stroke-width="1"/>
<ellipse cx="891.3" cy="222.3" rx="2.8" ry="3" fill="#c2bc7c" stroke="#101010" stroke-width="1"/>
<ellipse cx="880.4" cy="233.2" rx="2.8" ry="3" fill="#c1c29c" stroke="#101010" stroke-width="1"/>
<ellipse cx="826.4" cy="244.5" rx="2.8" ry="3" fill="#19c2bb" stroke="#101010" stroke-width="1"/>
<ellipse cx="834.5" cy="246.3" rx="2.8" ry="3" fill="#43c2bf" stroke="#101010" stroke-width="1"/>
<ellipse cx="843.3" cy="246.3" rx="2.8" ry="3" fill="#64c2bf" stroke="#101010" stroke-width="1"/>
<ellipse cx="852.4" cy="246.3" rx="2.8" ry="3" fill="#83c2bf" stroke="#101010" stroke-width="1"/>
<ellipse cx="860.3" cy="247.4" rx="2.8" ry="3" fill="#a1c2c1" stroke="#101010" stroke-width="1"/>
<ellipse cx="898.3" cy="247.2" rx="2.8" ry="3" fill="#c27e7e" stroke="#101010" stroke-width="1"/>
<ellipse cx="926.8" cy="247.2" rx="2.8" ry="3" fill="#c25858" stroke="#101010" stroke-width="1"/>
<ellipse cx="950.5" cy="248.3" rx="2.8" ry="3" fill="#c24143" stroke="#101010" stroke-width="1"/>
<ellipse cx="974.3" cy="248.3" rx="2.8" ry="3" fill="#c23032" stroke="#101010" stroke-width="1"/>
<ellipse cx="993.5" cy="250.3" rx="2.8" ry="3" fill="#c22127" stroke="#101010" stroke-width="1"/>
<ellipse cx="852.4" cy="265.3" rx="2.8" ry="3" fill="#8b97c2" stroke="#101010" stroke-width="1"/>
<ellipse cx="836.4" cy="283.3" rx="2.8" ry="3" fill="#6476c2" stroke="#101010" stroke-width="1"/>
<ellipse cx="820.4" cy="301" rx="2.8" ry="3" fill="#425dc2" stroke="#101010" stroke-width="1"/>
<ellipse cx="803.4" cy="320.5" rx="2.8" ry="3" fill="#2044c2" stroke="#101010" stroke-width="1"/>
<ellipse cx="786.4" cy="339.4" rx="2.8" ry="3" fill="#002188" stroke="#101010" stroke-width="1"/>
<ellipse cx="869" cy="258.4" rx="2.8" ry="3" fill="#bda4c2" stroke="#101010" stroke-width="1"/>
<ellipse cx="869" cy="271.5" rx="2.8" ry="3" fill="#bb85c2" stroke="#101010" stroke-width="1"/>
<ellipse cx="869" cy="280.8" rx="2.8" ry="3" fill="#ba6fc2" stroke="#101010" stroke-width="1"/>
<ellipse cx="869" cy="293.3" rx="2.8" ry="3" fill="#b954c2" stroke="#101010" stroke-width="1"/>
<ellipse cx="868" cy="304.9" rx="2.8" ry="3" fill="#b63bc2" stroke="#101010" stroke-width="1"/>
<rect x="865.5" y="242.5" width="9" height="10" fill="none" stroke="#000" stroke-width="1.3"/>
<ellipse cx="869.1" cy="247.5" rx="2.4" ry="2.9" fill="#fff" stroke="#111" stroke-width="1"/>
<rect x="1084.5" y="89.5" width="9" height="10" fill="none" stroke="#fff" stroke-width="1"/>
<rect x="1052.5" y="144.5" width="9" height="10" fill="none" stroke="#fff" stroke-width="1"/>
<ellipse cx="1077.05" cy="152.4" rx="2.55" ry="3" fill="#c2c200" stroke="#1a1a00" stroke-width="1"/>
<rect x="678" y="418" width="349" height="22" fill="url(#gHd)"/>
<rect x="678" y="418" width="11" height="22" fill="#000"/>
<rect x="689" y="440" width="338" height="20" fill="#454545"/>
<rect x="678" y="440" width="11" height="20" fill="#2a2a2a"/>
<text x="692.6" y="454.6" font-size="13" textLength="49.2" lengthAdjust="spacingAndGlyphs" fill="#f2f2f2">x: CIE31</text>
<text x="789.4" y="454.6" font-size="13" textLength="25.93" lengthAdjust="spacingAndGlyphs" fill="#f2f2f2">0,33</text>
<text x="839" y="454.6" font-size="13" textLength="25.93" lengthAdjust="spacingAndGlyphs" fill="#f2f2f2">0,35</text>
<text x="888.6" y="454.6" font-size="13" textLength="25.93" lengthAdjust="spacingAndGlyphs" fill="#f2f2f2">0,37</text>
<text x="938.4" y="454.6" font-size="13" textLength="25.93" lengthAdjust="spacingAndGlyphs" fill="#f2f2f2">0,39</text>
<text x="988" y="454.6" font-size="13" textLength="25.93" lengthAdjust="spacingAndGlyphs" fill="#f2f2f2">0,41</text>
<rect x="689" y="460" width="338" height="20" fill="#808080"/>
<rect x="678" y="460" width="11" height="20" fill="#323232"/>
<text x="692.6" y="474.6" font-size="13" textLength="49.2" lengthAdjust="spacingAndGlyphs" fill="#f2f2f2">y: CIE31</text>
<text x="789.4" y="474.6" font-size="13" textLength="25.93" lengthAdjust="spacingAndGlyphs" fill="#f2f2f2">0,36</text>
<text x="839" y="474.6" font-size="13" textLength="25.93" lengthAdjust="spacingAndGlyphs" fill="#f2f2f2">0,39</text>
<text x="888.6" y="474.6" font-size="13" textLength="25.93" lengthAdjust="spacingAndGlyphs" fill="#f2f2f2">0,42</text>
<text x="938.4" y="474.6" font-size="13" textLength="25.93" lengthAdjust="spacingAndGlyphs" fill="#f2f2f2">0,44</text>
<text x="988" y="474.6" font-size="13" textLength="25.93" lengthAdjust="spacingAndGlyphs" fill="#f2f2f2">0,47</text>
<rect x="689" y="480" width="338" height="20" fill="#404040"/>
<rect x="678" y="480" width="11" height="20" fill="#262626"/>
<text x="692.6" y="494.6" font-size="13" fill="#f2f2f2">Y</text>
<text x="789.4" y="494.6" font-size="13" textLength="40.76" lengthAdjust="spacingAndGlyphs" fill="#f2f2f2">105,87</text>
<text x="839" y="494.6" font-size="13" textLength="40.76" lengthAdjust="spacingAndGlyphs" fill="#f2f2f2">102,47</text>
<text x="888.6" y="494.6" font-size="13" textLength="33.35" lengthAdjust="spacingAndGlyphs" fill="#f2f2f2">99,81</text>
<text x="938.4" y="494.6" font-size="13" textLength="33.35" lengthAdjust="spacingAndGlyphs" fill="#f2f2f2">97,80</text>
<text x="988" y="494.6" font-size="13" textLength="33.35" lengthAdjust="spacingAndGlyphs" fill="#f2f2f2">95,73</text>
<rect x="689" y="500" width="338" height="20" fill="#808080"/>
<rect x="678" y="500" width="11" height="20" fill="#323232"/>
<text x="692.6" y="514.6" font-size="13" textLength="87.2" lengthAdjust="spacingAndGlyphs" fill="#f2f2f2">Target x:CIE31</text>
<text x="789.4" y="514.6" font-size="13" textLength="25.93" lengthAdjust="spacingAndGlyphs" fill="#f2f2f2">0,33</text>
<text x="839" y="514.6" font-size="13" textLength="25.93" lengthAdjust="spacingAndGlyphs" fill="#f2f2f2">0,36</text>
<text x="888.6" y="514.6" font-size="13" textLength="25.93" lengthAdjust="spacingAndGlyphs" fill="#f2f2f2">0,38</text>
<text x="938.4" y="514.6" font-size="13" textLength="25.93" lengthAdjust="spacingAndGlyphs" fill="#f2f2f2">0,40</text>
<text x="988" y="514.6" font-size="13" textLength="25.93" lengthAdjust="spacingAndGlyphs" fill="#f2f2f2">0,42</text>
<rect x="689" y="520" width="338" height="20" fill="#454545"/>
<rect x="678" y="520" width="11" height="20" fill="#2a2a2a"/>
<text x="692.6" y="534.6" font-size="13" textLength="87.2" lengthAdjust="spacingAndGlyphs" fill="#f2f2f2">Target y:CIE31</text>
<text x="789.4" y="534.6" font-size="13" textLength="25.93" lengthAdjust="spacingAndGlyphs" fill="#f2f2f2">0,36</text>
<text x="839" y="534.6" font-size="13" textLength="25.93" lengthAdjust="spacingAndGlyphs" fill="#f2f2f2">0,40</text>
<text x="888.6" y="534.6" font-size="13" textLength="25.93" lengthAdjust="spacingAndGlyphs" fill="#f2f2f2">0,44</text>
<text x="938.4" y="534.6" font-size="13" textLength="25.93" lengthAdjust="spacingAndGlyphs" fill="#f2f2f2">0,47</text>
<text x="988" y="534.6" font-size="13" textLength="25.93" lengthAdjust="spacingAndGlyphs" fill="#f2f2f2">0,51</text>
<rect x="689" y="540" width="338" height="20" fill="#808080"/>
<rect x="678" y="540" width="11" height="20" fill="#323232"/>
<text x="692.6" y="554.6" font-size="13" textLength="50.6" lengthAdjust="spacingAndGlyphs" fill="#f2f2f2">Target Y</text>
<text x="789.4" y="554.6" font-size="13" textLength="40.76" lengthAdjust="spacingAndGlyphs" fill="#f2f2f2">104,50</text>
<text x="839" y="554.6" font-size="13" textLength="40.76" lengthAdjust="spacingAndGlyphs" fill="#f2f2f2">102,66</text>
<text x="888.6" y="554.6" font-size="13" textLength="40.76" lengthAdjust="spacingAndGlyphs" fill="#f2f2f2">101,25</text>
<text x="938.4" y="554.6" font-size="13" textLength="40.76" lengthAdjust="spacingAndGlyphs" fill="#f2f2f2">100,15</text>
<text x="988" y="554.6" font-size="13" textLength="33.35" lengthAdjust="spacingAndGlyphs" fill="#f2f2f2">99,08</text>
<text x="789.4" y="433.6" font-size="12.5" textLength="24.39" lengthAdjust="spacingAndGlyphs" fill="#f6f6f6">20%</text>
<text x="839" y="433.6" font-size="12.5" textLength="24.39" lengthAdjust="spacingAndGlyphs" fill="#f6f6f6">40%</text>
<text x="888.6" y="433.6" font-size="12.5" textLength="24.39" lengthAdjust="spacingAndGlyphs" fill="#f6f6f6">60%</text>
<text x="938.4" y="433.6" font-size="12.5" textLength="24.39" lengthAdjust="spacingAndGlyphs" fill="#f6f6f6">80%</text>
<text x="988" y="433.6" font-size="12.5" textLength="31.17" lengthAdjust="spacingAndGlyphs" fill="#f6f6f6">100%</text>
<rect x="0" y="575.8" width="40" height="6" rx="2.5" fill="#5e5e5e"/>
<rect x="49" y="575.8" width="147" height="6" rx="2.5" fill="#5e5e5e"/>
<rect x="201" y="575.8" width="148" height="6" rx="2.5" fill="#5e5e5e"/>
<rect x="353" y="575.8" width="147" height="6" rx="2.5" fill="#5e5e5e"/>
<rect x="505" y="575.8" width="149" height="6" rx="2.5" fill="#5e5e5e"/>
<rect x="656" y="575.8" width="149" height="6" rx="2.5" fill="#1c1c1c"/>
<rect x="805" y="575.8" width="33" height="6" rx="2.5" fill="#4a4a4a"/>
<rect x="840" y="575.8" width="46" height="6" rx="2.5" fill="#6a6a6a"/>
<rect x="888" y="575.8" width="46" height="6" rx="2.5" fill="#6a6a6a"/>
<rect x="935" y="575.8" width="44.5" height="6" rx="2.5" fill="#6a6a6a"/>
<rect x="981" y="575.8" width="43" height="6" rx="2.5" fill="#6a6a6a"/>
<rect x="1025" y="575.8" width="44" height="6" rx="2.5" fill="#505050"/>
<rect x="1069" y="575.8" width="45" height="6" rx="2.5" fill="#3c3c3c"/>
<rect x="1115" y="575.8" width="47" height="6" rx="2.5" fill="#6a6a6a"/>
</svg></body></html>
